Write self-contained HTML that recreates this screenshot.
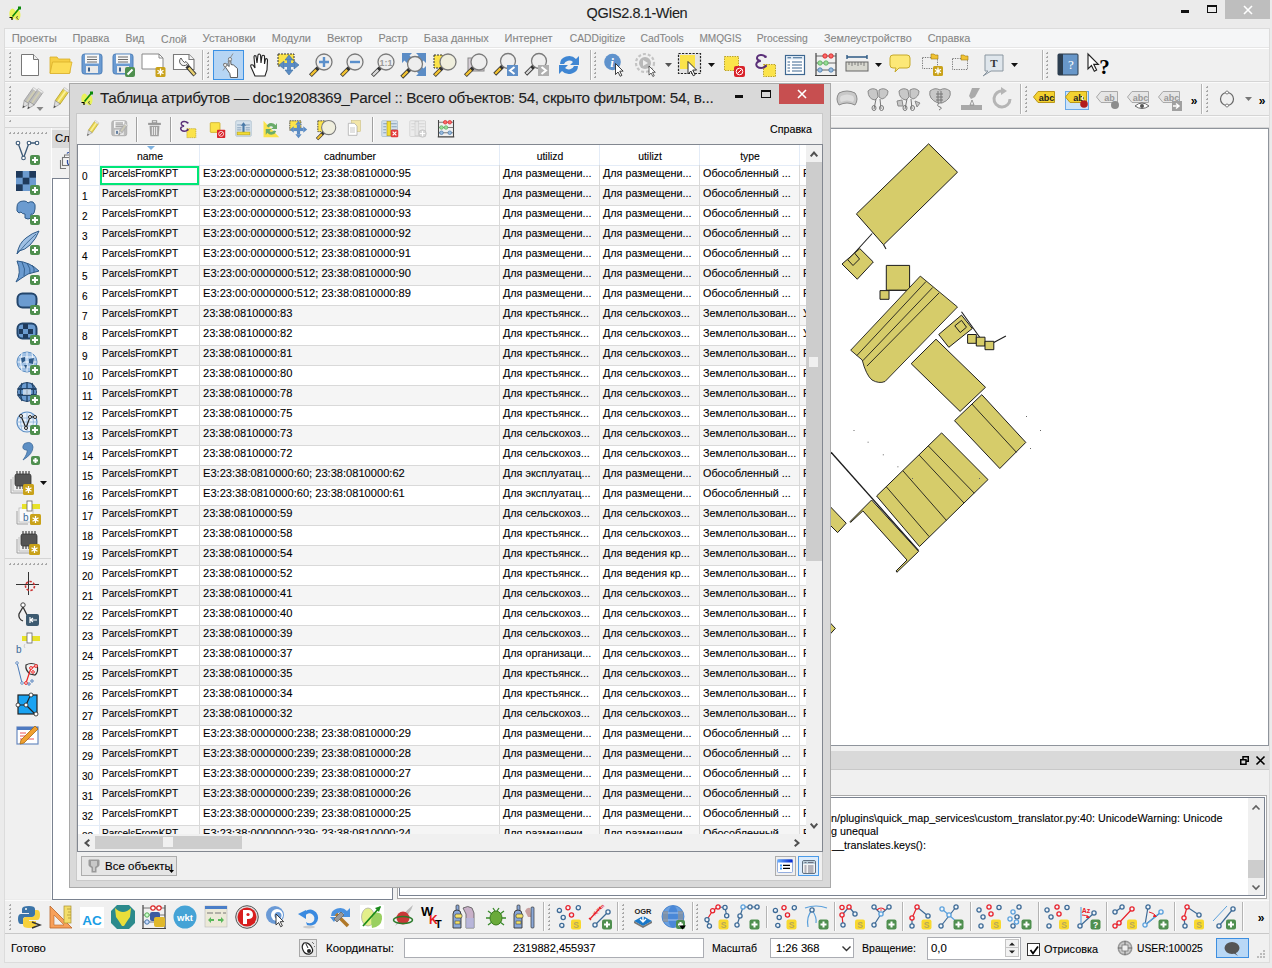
<!DOCTYPE html><html><head><meta charset='utf-8'><style>
*{margin:0;padding:0;box-sizing:border-box}
html,body{width:1272px;height:968px;overflow:hidden}
body{position:relative;background:#ebebeb;font-family:"Liberation Sans",sans-serif;}
.t{position:absolute;white-space:nowrap;line-height:1;-webkit-text-stroke:0.1px currentColor;}
svg{overflow:visible}
</style></head><body><svg style="position:absolute;left:9px;top:6px;" width="12" height="14" viewBox="0 0 12 14"><ellipse cx="3.5" cy="8" rx="3.2" ry="5.5" fill="#e9f25a"/><ellipse cx="8.3" cy="9" rx="3.2" ry="5.2" fill="#e9f25a"/><path d="M3.5 10.5 L10.5 2" stroke="#0a8a0a" stroke-width="1.6"/><rect x="9" y="0.5" width="3" height="3" fill="#0a8a0a"/><path d="M0.5 11.5 H3 V14" stroke="#000" stroke-width="1.2" fill="none"/><path d="M8.5 10 L7.5 12 L9.5 13.5" stroke="#333" stroke-width="0.8" fill="none"/></svg>
<div class="t" style="left:586.5px;top:5.6px;font-size:14.5px;color:#1e1e1e;letter-spacing:-0.4px">QGIS2.8.1-Wien</div>
<div style="position:absolute;left:1181px;top:10px;width:8px;height:3px;background:#111"></div>
<div style="position:absolute;left:1207px;top:5px;width:10px;height:8px;border:1px solid #111;border-top-width:2px"></div>
<div style="position:absolute;left:1225px;top:0px;width:45px;height:19px;background:#bebebe"></div>
<svg style="position:absolute;left:1243px;top:6px;" width="10" height="8" viewBox="0 0 10 8"><path d="M1 0 L9 8 M9 0 L1 8" stroke="#fff" stroke-width="1.6"/></svg>
<div style="position:absolute;left:5px;top:28px;width:1264px;height:20px;background:#f5f6f7;border-top:1px solid #dcdcdc;border-bottom:1px solid #e6e6e6"></div>
<div class="t" style="left:11.8px;top:33.110735px;font-size:11.21px;color:#868686;">Проекты</div>
<div class="t" style="left:72.5px;top:33.330825px;font-size:10.95px;color:#868686;">Правка</div>
<div class="t" style="left:125.5px;top:33.7964px;font-size:10.4px;color:#868686;">Вид</div>
<div class="t" style="left:161.1px;top:33.71175px;font-size:10.5px;color:#868686;">Слой</div>
<div class="t" style="left:202.5px;top:33.03455px;font-size:11.3px;color:#868686;">Установки</div>
<div class="t" style="left:271.8px;top:33.33929px;font-size:10.94px;color:#868686;">Модули</div>
<div class="t" style="left:326.9px;top:33.2885px;font-size:11.0px;color:#868686;">Вектор</div>
<div class="t" style="left:378.5px;top:33.398545000000006px;font-size:10.87px;color:#868686;">Растр</div>
<div class="t" style="left:423.8px;top:33.364685px;font-size:10.91px;color:#868686;">База данных</div>
<div class="t" style="left:504.5px;top:33.2885px;font-size:11.0px;color:#868686;">Интернет</div>
<div class="t" style="left:569.8px;top:33.88105px;font-size:10.3px;color:#868686;">CADDigitize</div>
<div class="t" style="left:640.5px;top:33.7964px;font-size:10.4px;color:#868686;">CadTools</div>
<div class="t" style="left:699.4px;top:34.05035px;font-size:10.1px;color:#868686;">MMQGIS</div>
<div class="t" style="left:756.7px;top:33.838725000000004px;font-size:10.35px;color:#868686;">Processing</div>
<div class="t" style="left:823.9px;top:33.4578px;font-size:10.8px;color:#868686;">Землеустройство</div>
<div class="t" style="left:927.7px;top:33.37315px;font-size:10.9px;color:#868686;">Справка</div>
<div style="position:absolute;left:5px;top:48px;width:1264px;height:80px;background:#f0f0f0;border-top:1px solid #fff"></div>
<div style="position:absolute;left:5px;top:81px;width:1264px;height:1px;background:#d5d5d5"></div>
<div style="position:absolute;left:5px;top:82px;width:1264px;height:1px;background:#fafafa"></div>
<div style="position:absolute;left:5px;top:115px;width:1264px;height:1px;background:#d5d5d5"></div>
<div style="position:absolute;left:5px;top:116px;width:1264px;height:1px;background:#fafafa"></div>
<div style="position:absolute;left:5px;top:127px;width:1264px;height:1px;background:#d5d5d5"></div>
<div style="position:absolute;left:5px;top:128px;width:46px;height:771px;background:#f0f0f0"></div>
<div style="position:absolute;left:51px;top:128px;width:1px;height:771px;background:#fdfdfd"></div>
<div style="position:absolute;left:52px;top:128px;width:345px;height:771px;background:#f0f0f0"></div>
<div style="position:absolute;left:52px;top:130px;width:40px;height:18px;background:#d9d9d9"></div>
<div class="t" style="left:55px;top:133px;font-size:11.3px;color:#000;">Слои</div>
<svg style="position:absolute;left:58px;top:152px;" width="12" height="18" viewBox="0 0 12 18"><path d="M2.5 8 V16.5 H8" stroke="#777" stroke-width="1.1" fill="none"/><rect x="4.5" y="5.5" width="9" height="8" fill="#f4f4f4" stroke="#777" stroke-width="1.1"/><rect x="6.5" y="3" width="8" height="2.5" fill="#f4f4f4" stroke="#777" stroke-width="1"/><path d="M9 1.5 Q9.5 0.5 11 0.5" stroke="#2a4aa0" stroke-width="1.2" fill="none"/><path d="M9.5 8 V11 Q9.5 12.5 11 12.5" stroke="#2a4aa0" stroke-width="1.3" fill="none"/></svg>
<div style="position:absolute;left:52px;top:178px;width:341px;height:722px;background:#fff;border:1px solid #7a8290"></div>
<div style="position:absolute;left:397px;top:128px;width:872px;height:618px;background:#fff;border:1px solid #8f949c"></div>
<div style="position:absolute;left:393px;top:746px;width:876px;height:154px;background:#f0f0f0"></div>
<div style="position:absolute;left:397px;top:751px;width:872px;height:19px;background:#d9d9d9;border-bottom:1px solid #c8c8c8"></div>
<div style="position:absolute;left:397px;top:795px;width:870px;height:104px;background:#fff;border:1px solid #a8a8a8"></div>
<div style="position:absolute;left:399px;top:797px;width:866px;height:99px;border:1px solid #7a8290"></div>
<div style="position:absolute;left:5px;top:900px;width:1264px;height:33px;background:#f0f0f0;border-top:1px solid #fbfbfb"></div>
<div style="position:absolute;left:5px;top:933px;width:1264px;height:29px;background:#f0f0f0;border-top:1px solid #c8c8c8"></div>
<div style="position:absolute;left:5px;top:962px;width:1264px;height:1px;background:#dcdcdc"></div>
<div style="position:absolute;left:1269px;top:28px;width:1px;height:935px;background:#dcdcdc"></div>
<div style="position:absolute;left:4px;top:28px;width:1px;height:935px;background:#dcdcdc"></div>
<svg style="position:absolute;left:9px;top:52px;" width="3" height="26" viewBox="0 0 3 26"><rect x="0" y="0" width="2" height="2" fill="#a8a8a8"/><rect x="0" y="0" width="1" height="1" fill="#ececec"/><rect x="0" y="4" width="2" height="2" fill="#a8a8a8"/><rect x="0" y="4" width="1" height="1" fill="#ececec"/><rect x="0" y="8" width="2" height="2" fill="#a8a8a8"/><rect x="0" y="8" width="1" height="1" fill="#ececec"/><rect x="0" y="12" width="2" height="2" fill="#a8a8a8"/><rect x="0" y="12" width="1" height="1" fill="#ececec"/><rect x="0" y="16" width="2" height="2" fill="#a8a8a8"/><rect x="0" y="16" width="1" height="1" fill="#ececec"/><rect x="0" y="20" width="2" height="2" fill="#a8a8a8"/><rect x="0" y="20" width="1" height="1" fill="#ececec"/><rect x="0" y="24" width="2" height="2" fill="#a8a8a8"/><rect x="0" y="24" width="1" height="1" fill="#ececec"/></svg>
<svg style="position:absolute;left:20px;top:53px;" width="24" height="24" viewBox="0 0 24 24"><path d="M1.5 1.5 H13.5 L18.5 6.5 V22.5 H1.5 Z" fill="#fff" stroke="#777" stroke-width="1"/><path d="M13.5 1.5 V6.5 H18.5" fill="#eee" stroke="#777" stroke-width="1"/></svg>
<svg style="position:absolute;left:49px;top:53px;" width="24" height="24" viewBox="0 0 24 24"><path d="M1 4 H8 L9.5 6 H21 V20 H1 Z" fill="#f6cf45" stroke="#d9ae2a" stroke-width="0.8"/><path d="M3.5 9 H23 L20.5 20.5 H1 Z" fill="#fcdc55" stroke="#d9ae2a" stroke-width="0.8"/></svg>
<svg style="position:absolute;left:81px;top:53px;" width="24" height="24" viewBox="0 0 24 24"><rect x="1" y="1" width="20" height="20" rx="2.5" fill="#6b9bd2" stroke="#4d7fb8" stroke-width="1"/><rect x="4" y="1.5" width="14" height="9" fill="#f7f7f7"/><path d="M6 4 H16 M6 6.5 H16 M6 9 H16" stroke="#444" stroke-width="0.8"/><rect x="5" y="13" width="12" height="7" fill="#eaeaea"/><rect x="7" y="14.5" width="2" height="4" fill="#3b5f8a"/></svg>
<svg style="position:absolute;left:112px;top:53px;" width="24" height="24" viewBox="0 0 24 24"><rect x="1" y="1" width="20" height="20" rx="2.5" fill="#6b9bd2" stroke="#4d7fb8" stroke-width="1"/><rect x="4" y="1.5" width="14" height="9" fill="#f7f7f7"/><path d="M6 4 H16 M6 6.5 H16 M6 9 H16" stroke="#444" stroke-width="0.8"/><rect x="5" y="13" width="12" height="7" fill="#eaeaea"/><rect x="7" y="14.5" width="2" height="4" fill="#3b5f8a"/><rect x="13" y="14" width="10" height="10" rx="2" fill="#4e8f4e"/><path d="M15.5 21.5 L20.5 16.5" stroke="#fff" stroke-width="2"/></svg>
<svg style="position:absolute;left:141px;top:53px;" width="24" height="24" viewBox="0 0 24 24"><path d="M1 1 H18 L22 5 V16 H1 Z" fill="#fff" stroke="#888" stroke-width="1"/><path d="M18 1 V5 H22" fill="none" stroke="#888" stroke-width="1"/><rect x="14.5" y="14" width="10" height="10" rx="1.5" fill="#c9a21a"/><path d="M19.5 15.5 V22.5 M16.5 17.2 L22.5 20.8 M16.5 20.8 L22.5 17.2" stroke="#fff" stroke-width="1.3"/><circle cx="19.5" cy="19.0" r="1.5" fill="#fff"/></svg>
<svg style="position:absolute;left:172px;top:53px;" width="24" height="24" viewBox="0 0 24 24"><path d="M1.5 1.5 H17 L22 6.5 V16.5 H1.5 Z" fill="#fff" stroke="#7a7a7a" stroke-width="1.1"/><path d="M17 1.5 V6.5 H22" fill="#f4f4f4" stroke="#7a7a7a" stroke-width="1.1"/><path d="M15 13 L23 22" stroke="#333" stroke-width="4.2"/><path d="M16.6 14.8 L22.6 21.6" stroke="#e8d070" stroke-width="2.4"/><path d="M9 5 A4.2 4.2 0 1 0 15 11.5 L15.5 13 L17 12 L14 8.5 L12.5 9.5 L10.5 7.5 Z" fill="#f4f4f4" stroke="#555" stroke-width="1"/></svg>
<div style="position:absolute;left:202px;top:50px;width:1px;height:30px;background:#b4b4b4"></div>
<div style="position:absolute;left:203px;top:50px;width:1px;height:30px;background:#fdfdfd"></div>
<svg style="position:absolute;left:207px;top:52px;" width="3" height="26" viewBox="0 0 3 26"><rect x="0" y="0" width="2" height="2" fill="#a8a8a8"/><rect x="0" y="0" width="1" height="1" fill="#ececec"/><rect x="0" y="4" width="2" height="2" fill="#a8a8a8"/><rect x="0" y="4" width="1" height="1" fill="#ececec"/><rect x="0" y="8" width="2" height="2" fill="#a8a8a8"/><rect x="0" y="8" width="1" height="1" fill="#ececec"/><rect x="0" y="12" width="2" height="2" fill="#a8a8a8"/><rect x="0" y="12" width="1" height="1" fill="#ececec"/><rect x="0" y="16" width="2" height="2" fill="#a8a8a8"/><rect x="0" y="16" width="1" height="1" fill="#ececec"/><rect x="0" y="20" width="2" height="2" fill="#a8a8a8"/><rect x="0" y="20" width="1" height="1" fill="#ececec"/><rect x="0" y="24" width="2" height="2" fill="#a8a8a8"/><rect x="0" y="24" width="1" height="1" fill="#ececec"/></svg>
<div style="position:absolute;left:213px;top:50px;width:31px;height:30px;background:#b6d5f4;border:1px solid #3c91e4"></div>
<svg style="position:absolute;left:217px;top:53px;" width="24" height="24" viewBox="0 0 24 24"><path d="M13.5 5 Q12 4.5 11.8 6.5 L12.2 13.5 L8.5 10.5 Q6.5 9.8 6.8 11.8 L12.8 20.5 L13.5 24.5 L20.5 24.5 L20.5 15.5 L16.5 12 L14 11.5 Z" fill="#fff" stroke="#555" stroke-width="0.95"/><path d="M16 0.5 L11 8.5 M12.8 7.5 L6 17.5" stroke="#888" stroke-width="0.9"/><circle cx="13" cy="6.2" r="1.7" fill="#e8e8e8" stroke="#666" stroke-width="0.7"/><circle cx="8.2" cy="12" r="1.7" fill="#e8e8e8" stroke="#666" stroke-width="0.7"/></svg>
<svg style="position:absolute;left:248px;top:53px;" width="24" height="24" viewBox="0 0 24 24"><path d="M7 23 L3 14 Q2 11 5 12 L7 15 L6 4 Q6 2 8 3 L9 10 L10 2 Q11 0 12.5 2 L13 10 L14 3 Q15 1.5 16.5 3 L16.5 11 L17.5 6 Q19 5 19.5 7 L19 17 L17 23 Z" fill="#fff" stroke="#222" stroke-width="1.1"/></svg>
<svg style="position:absolute;left:277px;top:53px;" width="24" height="24" viewBox="0 0 24 24"><rect x="1" y="1" width="16" height="12" fill="#fbe34a" stroke="#333" stroke-width="1" stroke-dasharray="2 1"/><path d="M12 2 L8 7 H16 Z M12 22 L8 17 H16 Z M2 12 L7 8 V16 Z M22 12 L17 8 V16 Z" fill="#5b8cc5" stroke="#3e6e9e" stroke-width="0.6"/><rect x="10" y="7" width="4" height="10" fill="#5b8cc5"/><rect x="7" y="10" width="10" height="4" fill="#5b8cc5"/></svg>
<svg style="position:absolute;left:309px;top:53px;" width="24" height="24" viewBox="0 0 24 24"><line x1="9.9" y1="14.1" x2="1.4000000000000004" y2="22.6" stroke="#333" stroke-width="4"/><line x1="7.2" y1="16.8" x2="1.9000000000000004" y2="22.1" stroke="#f2c230" stroke-width="2.4"/><circle cx="15" cy="9" r="8" fill="#eeeeee" stroke="#7a7a7a" stroke-width="1.3"/><path d="M15 4 V14 M10 9 H20" stroke="#5a8fcb" stroke-width="2.4"/></svg>
<svg style="position:absolute;left:340px;top:53px;" width="24" height="24" viewBox="0 0 24 24"><line x1="9.9" y1="14.1" x2="1.4000000000000004" y2="22.6" stroke="#333" stroke-width="4"/><line x1="7.2" y1="16.8" x2="1.9000000000000004" y2="22.1" stroke="#f2c230" stroke-width="2.4"/><circle cx="15" cy="9" r="8" fill="#eeeeee" stroke="#7a7a7a" stroke-width="1.3"/><path d="M10 9 H20" stroke="#5a8fcb" stroke-width="2.4"/></svg>
<svg style="position:absolute;left:371px;top:53px;" width="24" height="24" viewBox="0 0 24 24"><line x1="9.9" y1="14.1" x2="1.4000000000000004" y2="22.6" stroke="#333" stroke-width="4"/><line x1="7.2" y1="16.8" x2="1.9000000000000004" y2="22.1" stroke="#d8d8d8" stroke-width="2.4"/><circle cx="15" cy="9" r="8" fill="#eeeeee" stroke="#7a7a7a" stroke-width="1.3"/><text x="15" y="12.5" font-family="Liberation Sans" font-weight="bold" font-size="9" fill="#9a9a9a" text-anchor="middle">1:1</text></svg>
<svg style="position:absolute;left:402px;top:53px;" width="24" height="24" viewBox="0 0 24 24"><path d="M1 0 H10 L7.5 2.5 L10 5 L5 10 L2.5 7.5 L0 10 V0 Z M23 0 H14 L16.5 2.5 L14 5 L19 10 L21.5 7.5 L24 10 V0 Z M23 23 H14 L16.5 20.5 L14 18 L19 13 L21.5 15.5 L24 13 V23 Z" fill="#5b8cc5"/><line x1="8.25" y1="15.75" x2="-0.25" y2="24.25" stroke="#333" stroke-width="4"/><line x1="5.55" y1="18.45" x2="0.25" y2="23.75" stroke="#f2c230" stroke-width="2.4"/><circle cx="13" cy="11" r="7.5" fill="#eeeeee" stroke="#7a7a7a" stroke-width="1.3"/></svg>
<svg style="position:absolute;left:433px;top:53px;" width="24" height="24" viewBox="0 0 24 24"><rect x="1" y="2" width="9" height="13" fill="#fbe34a" stroke="#333" stroke-width="1" stroke-dasharray="2 1"/><line x1="9.9" y1="14.1" x2="1.4000000000000004" y2="22.6" stroke="#333" stroke-width="4"/><line x1="7.2" y1="16.8" x2="1.9000000000000004" y2="22.1" stroke="#f2c230" stroke-width="2.4"/><circle cx="15" cy="9" r="8" fill="#efeedd" stroke="#7a7a7a" stroke-width="1.3"/></svg>
<svg style="position:absolute;left:465px;top:53px;" width="24" height="24" viewBox="0 0 24 24"><rect x="3" y="5" width="16" height="13" fill="#d8d0d8" stroke="#888" stroke-width="1"/><line x1="8.9" y1="14.1" x2="0.40000000000000036" y2="22.6" stroke="#333" stroke-width="4"/><line x1="6.2" y1="16.8" x2="0.9000000000000004" y2="22.1" stroke="#f2c230" stroke-width="2.4"/><circle cx="14" cy="9" r="8" fill="#eeeeee" stroke="#7a7a7a" stroke-width="1.3"/></svg>
<svg style="position:absolute;left:495px;top:53px;" width="24" height="24" viewBox="0 0 24 24"><line x1="8.25" y1="12.75" x2="-0.25" y2="21.25" stroke="#333" stroke-width="4"/><line x1="5.55" y1="15.45" x2="0.25" y2="20.75" stroke="#f2c230" stroke-width="2.4"/><circle cx="13" cy="8" r="7.5" fill="#eeeeee" stroke="#7a7a7a" stroke-width="1.3"/><rect x="12" y="12" width="11" height="11" fill="#5f8fc8"/><path d="M19.5 14 L15 17.5 L19.5 21" stroke="#fff" stroke-width="2" fill="none"/></svg>
<svg style="position:absolute;left:526px;top:53px;" width="24" height="24" viewBox="0 0 24 24"><line x1="8.25" y1="12.75" x2="-0.25" y2="21.25" stroke="#333" stroke-width="4"/><line x1="5.55" y1="15.45" x2="0.25" y2="20.75" stroke="#d8d8d8" stroke-width="2.4"/><circle cx="13" cy="8" r="7.5" fill="#eeeeee" stroke="#7a7a7a" stroke-width="1.3"/><rect x="12" y="12" width="11" height="11" fill="#b0b0b0"/><path d="M15.5 14 L20 17.5 L15.5 21" stroke="#fff" stroke-width="2" fill="none"/></svg>
<svg style="position:absolute;left:557px;top:53px;" width="24" height="24" viewBox="0 0 24 24"><path d="M3 11 A9 8 0 0 1 19 6 L22 3 V12 H13 L16 9 A5.5 5 0 0 0 7 11 Z" fill="#3f86d3"/><path d="M21 13 A9 8 0 0 1 5 18 L2 21 V12 H11 L8 15 A5.5 5 0 0 0 17 13 Z" fill="#3f86d3"/></svg>
<div style="position:absolute;left:590px;top:50px;width:1px;height:30px;background:#b4b4b4"></div>
<div style="position:absolute;left:591px;top:50px;width:1px;height:30px;background:#fdfdfd"></div>
<svg style="position:absolute;left:594px;top:52px;" width="3" height="26" viewBox="0 0 3 26"><rect x="0" y="0" width="2" height="2" fill="#a8a8a8"/><rect x="0" y="0" width="1" height="1" fill="#ececec"/><rect x="0" y="4" width="2" height="2" fill="#a8a8a8"/><rect x="0" y="4" width="1" height="1" fill="#ececec"/><rect x="0" y="8" width="2" height="2" fill="#a8a8a8"/><rect x="0" y="8" width="1" height="1" fill="#ececec"/><rect x="0" y="12" width="2" height="2" fill="#a8a8a8"/><rect x="0" y="12" width="1" height="1" fill="#ececec"/><rect x="0" y="16" width="2" height="2" fill="#a8a8a8"/><rect x="0" y="16" width="1" height="1" fill="#ececec"/><rect x="0" y="20" width="2" height="2" fill="#a8a8a8"/><rect x="0" y="20" width="1" height="1" fill="#ececec"/><rect x="0" y="24" width="2" height="2" fill="#a8a8a8"/><rect x="0" y="24" width="1" height="1" fill="#ececec"/></svg>
<svg style="position:absolute;left:603px;top:53px;" width="24" height="24" viewBox="0 0 24 24"><circle cx="9.5" cy="9" r="8.3" fill="#5f92cc"/><text x="9" y="14" font-family="Liberation Serif" font-style="italic" font-weight="bold" font-size="13" fill="#fff" text-anchor="middle">i</text><path transform="translate(12.5,10.5) scale(0.85)" d="M0 0 L0 13 L3 10 L5.5 15 L7.5 14 L5 9 L9 9 Z" fill="#fff" stroke="#222" stroke-width="1"/></svg>
<svg style="position:absolute;left:634px;top:53px;" width="24" height="24" viewBox="0 0 24 24"><circle cx="11" cy="10" r="9" fill="none" stroke="#c4c4c4" stroke-width="2.2" stroke-dasharray="3 2"/><circle cx="11" cy="10" r="6" fill="#b9b9b9"/><path d="M9 7 L14 10 L9 13 Z" fill="#eee"/><path transform="translate(15,13) scale(0.7)" d="M0 0 L0 13 L3 10 L5.5 15 L7.5 14 L5 9 L9 9 Z" fill="#fff" stroke="#222" stroke-width="1"/></svg>
<svg style="position:absolute;left:664px;top:53px;" width="10" height="24" viewBox="0 0 10 24"><path d="M1 10 H8 L4.5 14 Z" fill="#555"/></svg>
<svg style="position:absolute;left:677px;top:53px;" width="24" height="24" viewBox="0 0 24 24"><rect x="1.5" y="0.5" width="22" height="20" fill="#e4e4e4" stroke="#222" stroke-width="1.2" stroke-dasharray="2.2 1.3"/><rect x="3" y="2" width="15" height="14" fill="#fbe34a"/><path transform="translate(11,8.5) scale(0.95)" d="M0 0 L0 13 L3 10 L5.5 15 L7.5 14 L5 9 L9 9 Z" fill="#fff" stroke="#222" stroke-width="1"/></svg>
<svg style="position:absolute;left:707px;top:53px;" width="10" height="24" viewBox="0 0 10 24"><path d="M1 10 H8 L4.5 14 Z" fill="#111"/></svg>
<svg style="position:absolute;left:723px;top:53px;" width="24" height="24" viewBox="0 0 24 24"><rect x="1.5" y="3.5" width="14" height="14" fill="#fbe34a" stroke="#b59b18" stroke-width="0.9" stroke-dasharray="1.5 1"/><rect x="11" y="13" width="11" height="11" rx="2" fill="#d9232b"/><circle cx="16.5" cy="18.5" r="3.3" fill="none" stroke="#fff" stroke-width="1"/><path d="M14.5 20.5 L18.5 16.5" stroke="#fff" stroke-width="1"/></svg>
<svg style="position:absolute;left:754px;top:53px;" width="24" height="24" viewBox="0 0 24 24"><rect x="9.5" y="11.5" width="12" height="12" fill="#fbe34a" stroke="#b59b18" stroke-width="0.9" stroke-dasharray="1.5 1"/><g transform="translate(1,1) scale(0.82)"><path d="M12.5 3.5 Q11 1 7 1.2 Q2 1.8 2.5 5.5 Q3 8 7 8.5 Q1.5 9.2 1.5 13 Q2 17 7.5 17 Q11.5 17 13 14.5" fill="none" stroke="#5a2f78" stroke-width="2.4"/><circle cx="12.8" cy="3.3" r="1.6" fill="#5a2f78"/><circle cx="13" cy="14.6" r="1.6" fill="#5a2f78"/></g></svg>
<svg style="position:absolute;left:784px;top:53px;" width="24" height="24" viewBox="0 0 24 24"><rect x="1.5" y="2.5" width="19" height="19" fill="#fff" stroke="#3d6790" stroke-width="1.2"/><rect x="2" y="3" width="18" height="3.5" fill="#dde8f3"/><path d="M3.5 4.8 H7 M9 4.8 H18 M3.5 9 H6 M8 9 H18 M3.5 12 H6 M8 12 H18 M3.5 15 H6 M8 15 H18 M3.5 18 H6 M8 18 H18" stroke="#3d6790" stroke-width="1.1"/></svg>
<svg style="position:absolute;left:814px;top:53px;" width="24" height="24" viewBox="0 0 24 24"><path d="M2 0 V22 M22 0 V22 M1 22.5 H23" stroke="#444" stroke-width="1.2"/><path d="M2 3 H22 M2 10 H22 M2 17 H22" stroke="#555" stroke-width="0.9"/><circle cx="11" cy="3" r="2.2" fill="#f66" stroke="#c22" stroke-width="0.8"/><circle cx="17" cy="3" r="2.2" fill="#f66" stroke="#c22" stroke-width="0.8"/><circle cx="6" cy="10" r="2.2" fill="#9d9" stroke="#5a5" stroke-width="0.8"/><circle cx="12" cy="10" r="2.2" fill="#9d9" stroke="#5a5" stroke-width="0.8"/><circle cx="6" cy="17" r="2.2" fill="#9bd" stroke="#47a" stroke-width="0.8"/><circle cx="17" cy="17" r="2.2" fill="#9bd" stroke="#47a" stroke-width="0.8"/></svg>
<svg style="position:absolute;left:845px;top:53px;" width="24" height="24" viewBox="0 0 24 24"><rect x="1" y="9" width="22" height="9" fill="#d8d8d0" stroke="#666" stroke-width="1"/><path d="M4 9 V12 M7 9 V13 M10 9 V12 M13 9 V13 M16 9 V12 M19 9 V13" stroke="#666" stroke-width="0.8"/><path d="M2 4 H22 M2 2 V6 M22 2 V6" stroke="#2e5a84" stroke-width="1.4"/></svg>
<svg style="position:absolute;left:874px;top:53px;" width="10" height="24" viewBox="0 0 10 24"><path d="M1 10 H8 L4.5 14 Z" fill="#111"/></svg>
<svg style="position:absolute;left:889px;top:53px;" width="24" height="24" viewBox="0 0 24 24"><path d="M4 2 H18 Q21 2 21 5 V12 Q21 15 18 15 H10 L6 19 L7 15 H4 Q1 15 1 12 V5 Q1 2 4 2 Z" fill="#fce877" stroke="#c6a92a" stroke-width="1"/></svg>
<svg style="position:absolute;left:921px;top:53px;" width="24" height="24" viewBox="0 0 24 24"><rect x="1.5" y="4.5" width="15" height="11" fill="none" stroke="#555" stroke-width="0.8" stroke-dasharray="1.2 1.2"/><path d="M10 5 V1 H13 L14 2 H17 V6 H10Z" fill="#f1c232" stroke="#9a7a14" stroke-width="0.6"/><rect x="12" y="13" width="10" height="10" rx="1.5" fill="#c9a21a"/><path d="M17.0 14.5 V21.5 M14.0 16.2 L20.0 19.8 M14.0 19.8 L20.0 16.2" stroke="#fff" stroke-width="1.3"/><circle cx="17.0" cy="18.0" r="1.5" fill="#fff"/></svg>
<svg style="position:absolute;left:951px;top:53px;" width="24" height="24" viewBox="0 0 24 24"><rect x="1.5" y="5.5" width="15" height="11" fill="none" stroke="#555" stroke-width="0.8" stroke-dasharray="1.2 1.2"/><path d="M10 6 V2 H13 L14 3 H17 V7 H10Z" fill="#f1c232" stroke="#9a7a14" stroke-width="0.6"/></svg>
<svg style="position:absolute;left:982px;top:53px;" width="24" height="24" viewBox="0 0 24 24"><path d="M3 2 H21 V18 H9 L1 23 L6 18 H3 Z" fill="#dfe6ec" stroke="#8a96a0" stroke-width="1"/><text x="12" y="14" font-family="Liberation Serif" font-weight="bold" font-size="11" fill="#333" text-anchor="middle">T</text></svg>
<svg style="position:absolute;left:1010px;top:53px;" width="10" height="24" viewBox="0 0 10 24"><path d="M1 10 H8 L4.5 14 Z" fill="#111"/></svg>
<div style="position:absolute;left:1042px;top:50px;width:1px;height:30px;background:#b4b4b4"></div>
<div style="position:absolute;left:1043px;top:50px;width:1px;height:30px;background:#fdfdfd"></div>
<svg style="position:absolute;left:1046px;top:52px;" width="3" height="26" viewBox="0 0 3 26"><rect x="0" y="0" width="2" height="2" fill="#a8a8a8"/><rect x="0" y="0" width="1" height="1" fill="#ececec"/><rect x="0" y="4" width="2" height="2" fill="#a8a8a8"/><rect x="0" y="4" width="1" height="1" fill="#ececec"/><rect x="0" y="8" width="2" height="2" fill="#a8a8a8"/><rect x="0" y="8" width="1" height="1" fill="#ececec"/><rect x="0" y="12" width="2" height="2" fill="#a8a8a8"/><rect x="0" y="12" width="1" height="1" fill="#ececec"/><rect x="0" y="16" width="2" height="2" fill="#a8a8a8"/><rect x="0" y="16" width="1" height="1" fill="#ececec"/><rect x="0" y="20" width="2" height="2" fill="#a8a8a8"/><rect x="0" y="20" width="1" height="1" fill="#ececec"/><rect x="0" y="24" width="2" height="2" fill="#a8a8a8"/><rect x="0" y="24" width="1" height="1" fill="#ececec"/></svg>
<svg style="position:absolute;left:1057px;top:53px;" width="24" height="24" viewBox="0 0 24 24"><rect x="1" y="1" width="20" height="21" rx="1" fill="#6897c9" stroke="#2b3a4a" stroke-width="1"/><rect x="1" y="1" width="5" height="21" fill="#2c3e50"/><text x="14" y="16" font-family="Liberation Serif" font-size="13" fill="#fff" text-anchor="middle">?</text></svg>
<svg style="position:absolute;left:1087px;top:53px;" width="24" height="24" viewBox="0 0 24 24"><path transform="translate(1,1) scale(1.15)" d="M0 0 L0 13 L3 10 L5.5 15 L7.5 14 L5 9 L9 9 Z" fill="#fff" stroke="#222" stroke-width="1"/><text x="17.5" y="21" font-family="Liberation Serif" font-weight="bold" font-size="21" fill="#000" text-anchor="middle">?</text></svg>
<svg style="position:absolute;left:9px;top:86px;" width="3" height="26" viewBox="0 0 3 26"><rect x="0" y="0" width="2" height="2" fill="#a8a8a8"/><rect x="0" y="0" width="1" height="1" fill="#ececec"/><rect x="0" y="4" width="2" height="2" fill="#a8a8a8"/><rect x="0" y="4" width="1" height="1" fill="#ececec"/><rect x="0" y="8" width="2" height="2" fill="#a8a8a8"/><rect x="0" y="8" width="1" height="1" fill="#ececec"/><rect x="0" y="12" width="2" height="2" fill="#a8a8a8"/><rect x="0" y="12" width="1" height="1" fill="#ececec"/><rect x="0" y="16" width="2" height="2" fill="#a8a8a8"/><rect x="0" y="16" width="1" height="1" fill="#ececec"/><rect x="0" y="20" width="2" height="2" fill="#a8a8a8"/><rect x="0" y="20" width="1" height="1" fill="#ececec"/><rect x="0" y="24" width="2" height="2" fill="#a8a8a8"/><rect x="0" y="24" width="1" height="1" fill="#ececec"/></svg>
<svg style="position:absolute;left:19px;top:87px;" width="24" height="24" viewBox="0 0 24 24"><g transform="translate(-2,0)"><g transform="rotate(35 12 12)"><rect x="9" y="1" width="6" height="15" fill="#bdbdbd" stroke="#a0a0a0" stroke-width="0.8"/><rect x="11" y="1" width="2" height="15" fill="#fbf3a0" opacity="0.3"/><rect x="9" y="0" width="6" height="2" fill="#eee" stroke="#bbb" stroke-width="0.6"/><path d="M9 16 L15 16 L12 23 Z" fill="#ddd" stroke="#888" stroke-width="0.6"/><path d="M11 20.5 L13 20.5 L12 23Z" fill="#444"/></g></g><g transform="translate(3,1)"><g transform="rotate(35 12 12)"><rect x="9" y="1" width="6" height="15" fill="#bdbdbd" stroke="#a0a0a0" stroke-width="0.8"/><rect x="11" y="1" width="2" height="15" fill="#fbf3a0" opacity="0.3"/><rect x="9" y="0" width="6" height="2" fill="#eee" stroke="#bbb" stroke-width="0.6"/><path d="M9 16 L15 16 L12 23 Z" fill="#ddd" stroke="#888" stroke-width="0.6"/><path d="M11 20.5 L13 20.5 L12 23Z" fill="#444"/></g></g><path d="M17.5 20 H24.5 L21.0 24 Z" fill="#888"/></svg>
<svg style="position:absolute;left:48px;top:87px;" width="24" height="24" viewBox="0 0 24 24"><g transform="rotate(35 12 12)"><rect x="9" y="1" width="6" height="15" fill="#e8d44d" stroke="#b8a430" stroke-width="0.8"/><rect x="11" y="1" width="2" height="15" fill="#fbf3a0" opacity="0.9"/><rect x="9" y="0" width="6" height="2" fill="#eee" stroke="#bbb" stroke-width="0.6"/><path d="M9 16 L15 16 L12 23 Z" fill="#ddd" stroke="#888" stroke-width="0.6"/><path d="M11 20.5 L13 20.5 L12 23Z" fill="#444"/></g></svg>
<svg style="position:absolute;left:835px;top:87px;" width="24" height="24" viewBox="0 0 24 24"><g fill="#c8c8c8" stroke="#8a8a8a" stroke-width="1"><path d="M4 6 Q12 2 20 6 Q24 12 20 18 Q12 14 4 18 Q0 12 4 6 Z"/></g><path d="M6 9 Q12 6 18 9 Q20 12 18 15 Q12 12 6 15 Q4 12 6 9Z" fill="#ddd"/></svg>
<svg style="position:absolute;left:866px;top:87px;" width="24" height="24" viewBox="0 0 24 24"><g fill="#c8c8c8" stroke="#8a8a8a" stroke-width="1"><path d="M2 4 Q6 0 11 3 L12 10 L9 13 Q2 12 2 4 Z M13 3 Q18 0 22 4 Q22 10 16 12 L13 10 Z"/></g><path d="M10 12 L8 22 M14 12 L15 22" stroke="#777" stroke-width="1"/><ellipse cx="8" cy="21" rx="2" ry="2.5" fill="none" stroke="#777"/><ellipse cx="15.5" cy="21" rx="2" ry="2.5" fill="none" stroke="#777"/></svg>
<svg style="position:absolute;left:897px;top:87px;" width="24" height="24" viewBox="0 0 24 24"><g fill="#c8c8c8" stroke="#8a8a8a" stroke-width="1"><path d="M2 4 Q6 0 11 3 L12 10 L9 13 Q2 12 2 4 Z M13 3 Q18 0 22 4 Q22 10 16 12 L13 10 Z M0 14 L5 13 L6 19 L1 19Z M18 14 L23 16 L20 20Z"/></g><path d="M10 12 L8 22 M14 12 L15 22" stroke="#777" stroke-width="1"/><ellipse cx="8" cy="21" rx="2" ry="2.5" fill="none" stroke="#777"/><ellipse cx="15.5" cy="21" rx="2" ry="2.5" fill="none" stroke="#777"/></svg>
<svg style="position:absolute;left:928px;top:87px;" width="24" height="24" viewBox="0 0 24 24"><g fill="#c8c8c8" stroke="#8a8a8a" stroke-width="1"><path d="M2 4 Q7 0 12 3 Q17 0 22 4 Q24 12 14 16 L10 16 Q0 12 2 4 Z"/></g><path d="M10 4 V16 M13 4 V16 M8 7 H15 M8 10 H15 M8 13 H15 M11 16 Q8 19 12 20 Q15 21 11 23" stroke="#777" stroke-width="1" fill="none"/></svg>
<svg style="position:absolute;left:960px;top:87px;" width="24" height="24" viewBox="0 0 24 24"><path d="M12 1 H20 L15 10 L11 12 L9 9 Z" fill="#aaa"/><path d="M1 18 H22 V23 H1 Z" fill="#a8a8a8"/><path d="M10 18 L12 13 L14 18 Z" fill="#eee" stroke="#888" stroke-width="0.8"/></svg>
<svg style="position:absolute;left:991px;top:87px;" width="24" height="24" viewBox="0 0 24 24"><path d="M19 12 A8 8 0 1 1 12 4" fill="none" stroke="#b5b5b5" stroke-width="3"/><path d="M10 0 L16 4 L10 8 Z" fill="#b5b5b5"/></svg>
<div style="position:absolute;left:1020px;top:84px;width:1px;height:30px;background:#b4b4b4"></div>
<div style="position:absolute;left:1021px;top:84px;width:1px;height:30px;background:#fdfdfd"></div>
<svg style="position:absolute;left:1025px;top:86px;" width="3" height="26" viewBox="0 0 3 26"><rect x="0" y="0" width="2" height="2" fill="#a8a8a8"/><rect x="0" y="0" width="1" height="1" fill="#ececec"/><rect x="0" y="4" width="2" height="2" fill="#a8a8a8"/><rect x="0" y="4" width="1" height="1" fill="#ececec"/><rect x="0" y="8" width="2" height="2" fill="#a8a8a8"/><rect x="0" y="8" width="1" height="1" fill="#ececec"/><rect x="0" y="12" width="2" height="2" fill="#a8a8a8"/><rect x="0" y="12" width="1" height="1" fill="#ececec"/><rect x="0" y="16" width="2" height="2" fill="#a8a8a8"/><rect x="0" y="16" width="1" height="1" fill="#ececec"/><rect x="0" y="20" width="2" height="2" fill="#a8a8a8"/><rect x="0" y="20" width="1" height="1" fill="#ececec"/><rect x="0" y="24" width="2" height="2" fill="#a8a8a8"/><rect x="0" y="24" width="1" height="1" fill="#ececec"/></svg>
<svg style="position:absolute;left:1033px;top:87px;" width="24" height="24" viewBox="0 0 24 24"><path d="M0.5 10 L5 4.5 H21.5 V15.5 H5 Z" fill="#f4d230" stroke="#b9961b" stroke-width="1"/><text x="13.5" y="13.5" font-family="Liberation Sans" font-weight="bold" font-size="9" fill="#222" text-anchor="middle">abc</text></svg>
<div style="position:absolute;left:1065px;top:91px;width:24px;height:19px;background:#cde3f8;border:1px solid #6aa8e8"></div>
<svg style="position:absolute;left:1065px;top:87px;" width="24" height="24" viewBox="0 0 24 24"><path d="M0.5 10 L5 4.5 H21.5 V15.5 H5 Z" fill="#f4d230" stroke="#b9961b" stroke-width="1"/><text x="13.5" y="13.5" font-family="Liberation Sans" font-weight="bold" font-size="9" fill="#222" text-anchor="middle">ab</text><circle cx="19" cy="17" r="3.8" fill="#b21c1c"/><path d="M18 9 Q16 12 18.5 13" stroke="#fff" stroke-width="1.2" fill="none"/></svg>
<svg style="position:absolute;left:1096px;top:87px;" width="24" height="24" viewBox="0 0 24 24"><path d="M0.5 10 L5 4.5 H21.5 V15.5 H5 Z" fill="#e6e6e6" stroke="#a9a9a9" stroke-width="1"/><text x="13.5" y="13.5" font-family="Liberation Sans" font-weight="bold" font-size="9" fill="#999" text-anchor="middle">ab</text><circle cx="19" cy="18" r="4" fill="#8c8c8c"/></svg>
<svg style="position:absolute;left:1127px;top:87px;" width="24" height="24" viewBox="0 0 24 24"><path d="M0.5 10 L5 4.5 H21.5 V15.5 H5 Z" fill="#e6e6e6" stroke="#a9a9a9" stroke-width="1"/><text x="13.5" y="13.5" font-family="Liberation Sans" font-weight="bold" font-size="9" fill="#999" text-anchor="middle">abc</text><path d="M8 19 Q15 13 22 19 Q15 24 8 19 Z" fill="#fff" stroke="#666" stroke-width="1"/><circle cx="15" cy="19" r="2" fill="#555"/></svg>
<svg style="position:absolute;left:1158px;top:87px;" width="24" height="24" viewBox="0 0 24 24"><path d="M0.5 10 L5 4.5 H21.5 V15.5 H5 Z" fill="#e6e6e6" stroke="#a9a9a9" stroke-width="1"/><text x="13.5" y="13.5" font-family="Liberation Sans" font-weight="bold" font-size="9" fill="#999" text-anchor="middle">abc</text><rect x="14" y="14" width="10" height="10" fill="#a0a0a0"/><path d="M15 19 H20 M18 16.5 L21 19 L18 21.5" stroke="#fff" stroke-width="1.5" fill="none"/></svg>
<svg style="position:absolute;left:1190px;top:87px;" width="10" height="24" viewBox="0 0 10 24"><text x="4" y="18" font-family="Liberation Sans" font-weight="bold" font-size="12" fill="#000" text-anchor="middle">»</text></svg>
<div style="position:absolute;left:1201px;top:84px;width:1px;height:30px;background:#b4b4b4"></div>
<div style="position:absolute;left:1202px;top:84px;width:1px;height:30px;background:#fdfdfd"></div>
<svg style="position:absolute;left:1206px;top:86px;" width="3" height="26" viewBox="0 0 3 26"><rect x="0" y="0" width="2" height="2" fill="#a8a8a8"/><rect x="0" y="0" width="1" height="1" fill="#ececec"/><rect x="0" y="4" width="2" height="2" fill="#a8a8a8"/><rect x="0" y="4" width="1" height="1" fill="#ececec"/><rect x="0" y="8" width="2" height="2" fill="#a8a8a8"/><rect x="0" y="8" width="1" height="1" fill="#ececec"/><rect x="0" y="12" width="2" height="2" fill="#a8a8a8"/><rect x="0" y="12" width="1" height="1" fill="#ececec"/><rect x="0" y="16" width="2" height="2" fill="#a8a8a8"/><rect x="0" y="16" width="1" height="1" fill="#ececec"/><rect x="0" y="20" width="2" height="2" fill="#a8a8a8"/><rect x="0" y="20" width="1" height="1" fill="#ececec"/><rect x="0" y="24" width="2" height="2" fill="#a8a8a8"/><rect x="0" y="24" width="1" height="1" fill="#ececec"/></svg>
<svg style="position:absolute;left:1219px;top:87px;" width="18" height="24" viewBox="0 0 18 24"><circle cx="8" cy="12" r="6.5" fill="none" stroke="#666" stroke-width="1.2"/><circle cx="8" cy="5.5" r="1.5" fill="#fff" stroke="#666" stroke-width="0.8"/><circle cx="8" cy="18.5" r="1.5" fill="#fff" stroke="#666" stroke-width="0.8"/></svg>
<svg style="position:absolute;left:1244px;top:87px;" width="10" height="24" viewBox="0 0 10 24"><path d="M1 10 H8 L4.5 14 Z" fill="#777"/></svg>
<svg style="position:absolute;left:1258px;top:87px;" width="10" height="24" viewBox="0 0 10 24"><text x="4" y="18" font-family="Liberation Sans" font-weight="bold" font-size="12" fill="#000" text-anchor="middle">»</text></svg>
<svg style="position:absolute;left:9px;top:120px;" width="3" height="4" viewBox="0 0 3 4"><rect x="0" y="0" width="2" height="2" fill="#a8a8a8"/><rect x="0" y="0" width="1" height="1" fill="#ececec"/></svg>
<svg style="position:absolute;left:9px;top:132px;" width="39" height="3" viewBox="0 0 39 3"><rect x="0" y="0" width="2" height="2" fill="#a8a8a8"/><rect x="0" y="0" width="1" height="1" fill="#ececec"/><rect x="4" y="0" width="2" height="2" fill="#a8a8a8"/><rect x="4" y="0" width="1" height="1" fill="#ececec"/><rect x="8" y="0" width="2" height="2" fill="#a8a8a8"/><rect x="8" y="0" width="1" height="1" fill="#ececec"/><rect x="12" y="0" width="2" height="2" fill="#a8a8a8"/><rect x="12" y="0" width="1" height="1" fill="#ececec"/><rect x="16" y="0" width="2" height="2" fill="#a8a8a8"/><rect x="16" y="0" width="1" height="1" fill="#ececec"/><rect x="20" y="0" width="2" height="2" fill="#a8a8a8"/><rect x="20" y="0" width="1" height="1" fill="#ececec"/><rect x="24" y="0" width="2" height="2" fill="#a8a8a8"/><rect x="24" y="0" width="1" height="1" fill="#ececec"/><rect x="28" y="0" width="2" height="2" fill="#a8a8a8"/><rect x="28" y="0" width="1" height="1" fill="#ececec"/><rect x="32" y="0" width="2" height="2" fill="#a8a8a8"/><rect x="32" y="0" width="1" height="1" fill="#ececec"/><rect x="36" y="0" width="2" height="2" fill="#a8a8a8"/><rect x="36" y="0" width="1" height="1" fill="#ececec"/></svg>
<svg style="position:absolute;left:16px;top:141px;" width="24" height="24" viewBox="0 0 24 24"><path d="M2 2 L7.5 17 L13 2 L21 2" fill="none" stroke="#3c5a78" stroke-width="1.3"/><circle cx="2" cy="2" r="1.8" fill="#fff" stroke="#3c5a78" stroke-width="1.1"/><circle cx="13" cy="2" r="1.8" fill="#fff" stroke="#3c5a78" stroke-width="1.1"/><circle cx="21" cy="2" r="1.8" fill="#fff" stroke="#3c5a78" stroke-width="1.1"/><circle cx="7.5" cy="17" r="1.8" fill="#fff" stroke="#3c5a78" stroke-width="1.1"/><rect x="14" y="14" width="10" height="10" rx="2" fill="#4f8f4f"/><path d="M19.0 16 V22 M16 19.0 H22" stroke="#fff" stroke-width="2"/></svg>
<svg style="position:absolute;left:16px;top:171px;" width="24" height="24" viewBox="0 0 24 24"><rect x="0" y="0" width="20" height="20" fill="#6c9bd0"/><rect x="0" y="0" width="6.7" height="6.7" fill="#1f3a5c"/><rect x="13.3" y="0" width="6.7" height="6.7" fill="#1f3a5c"/><rect x="6.7" y="6.7" width="6.7" height="6.7" fill="#1f3a5c"/><rect x="0" y="13.3" width="6.7" height="6.7" fill="#1f3a5c"/><rect x="14" y="14" width="10" height="10" rx="2" fill="#4f8f4f"/><path d="M19.0 16 V22 M16 19.0 H22" stroke="#fff" stroke-width="2"/></svg>
<svg style="position:absolute;left:16px;top:201px;" width="24" height="24" viewBox="0 0 24 24"><path d="M1 6 Q1 0 8 0 Q11 0 12 2 Q14 0 17 1 Q20 3 19 8 L18 12 Q17 14 15 13 L15 17 Q12 19 9 17 L9 13 Q6 13 5 11 L3 12 Q0 11 1 6 Z" fill="#6b9bd0" stroke="#2f5a88" stroke-width="1"/><rect x="14" y="14" width="10" height="10" rx="2" fill="#4f8f4f"/><path d="M19.0 16 V22 M16 19.0 H22" stroke="#fff" stroke-width="2"/></svg>
<svg style="position:absolute;left:16px;top:231px;" width="24" height="24" viewBox="0 0 24 24"><path d="M1 23 Q3 12 10 7 Q16 2 23 0 Q20 8 14 14 Q9 19 3 20 Z" fill="#9fc0e4" stroke="#2f5a88" stroke-width="1"/><path d="M1 23 Q10 12 20 3" stroke="#2f5a88" stroke-width="0.8" fill="none"/><rect x="14" y="14" width="10" height="10" rx="2" fill="#4f8f4f"/><path d="M19.0 16 V22 M16 19.0 H22" stroke="#fff" stroke-width="2"/></svg>
<svg style="position:absolute;left:16px;top:261px;" width="24" height="24" viewBox="0 0 24 24"><path d="M1 0 Q14 1 23 10 L12 13 Q4 18 0 21 Q6 12 1 0 Z" fill="#6b9bd0" stroke="#2f5a88" stroke-width="1"/><path d="M6 1 Q10 8 8 15 M11 2 Q15 8 14 13 M16 4 Q19 8 18 11" stroke="#2f5a88" stroke-width="0.9" fill="none"/><rect x="14" y="14" width="10" height="10" rx="2" fill="#4f8f4f"/><path d="M19.0 16 V22 M16 19.0 H22" stroke="#fff" stroke-width="2"/></svg>
<svg style="position:absolute;left:16px;top:291px;" width="24" height="24" viewBox="0 0 24 24"><rect x="1.5" y="2.5" width="19" height="14" rx="5" fill="#6b9bd0" stroke="#23456b" stroke-width="2"/><rect x="14" y="14" width="10" height="10" rx="2" fill="#4f8f4f"/><path d="M19.0 16 V22 M16 19.0 H22" stroke="#fff" stroke-width="2"/></svg>
<svg style="position:absolute;left:16px;top:321px;" width="24" height="24" viewBox="0 0 24 24"><rect x="1.5" y="2.5" width="19" height="15" rx="5" fill="#6b9bd0" stroke="#23456b" stroke-width="2"/><rect x="7" y="3" width="5" height="5" fill="#1f3a5c"/><rect x="12" y="8" width="5" height="5" fill="#1f3a5c"/><rect x="7" y="13" width="5" height="4" fill="#1f3a5c"/><rect x="3" y="8" width="4" height="5" fill="#1f3a5c"/><rect x="14" y="14" width="10" height="10" rx="2" fill="#4f8f4f"/><path d="M19.0 16 V22 M16 19.0 H22" stroke="#fff" stroke-width="2"/></svg>
<svg style="position:absolute;left:16px;top:351px;" width="24" height="24" viewBox="0 0 24 24"><circle cx="11" cy="11" r="10" fill="#9fc0e4" stroke="#5d8fc4" stroke-width="1"/><path d="M3 6 H19 M1.5 11 H20.5 M3 16 H19 M11 1 V21 M6 2 Q3 11 6 20 M16 2 Q19 11 16 20" stroke="#fff" stroke-width="0.8" fill="none"/><path d="M5 7 L9 6 L9 10 L6 12Z M13 8 L18 7 L17 13 L13 12Z M8 14 L11 14 L10 18Z" fill="#2f5a88"/><rect x="14" y="14" width="10" height="10" rx="2" fill="#4f8f4f"/><path d="M19.0 16 V22 M16 19.0 H22" stroke="#fff" stroke-width="2"/></svg>
<svg style="position:absolute;left:16px;top:381px;" width="24" height="24" viewBox="0 0 24 24"><circle cx="11" cy="11" r="10" fill="#23456b"/><ellipse cx="11" cy="11" rx="9" ry="9" fill="#6b9bd0"/><path d="M1.5 8 H20.5 M1.5 14 H20.5" stroke="#23456b" stroke-width="2"/><path d="M11 1 V21 M6 2 Q3 11 6 20 M16 2 Q19 11 16 20" stroke="#23456b" stroke-width="1.4" fill="none"/><rect x="7" y="8" width="8" height="6" fill="#fff" opacity="0.6"/><rect x="14" y="14" width="10" height="10" rx="2" fill="#4f8f4f"/><path d="M19.0 16 V22 M16 19.0 H22" stroke="#fff" stroke-width="2"/></svg>
<svg style="position:absolute;left:16px;top:411px;" width="24" height="24" viewBox="0 0 24 24"><circle cx="11" cy="11" r="10" fill="#eaf2fb" stroke="#5d8fc4" stroke-width="1.2"/><path d="M2 7 H20 M1 11 H21 M2 15 H20 M11 1 V21 M6 2 Q3 11 6 20 M16 2 Q19 11 16 20" stroke="#8fb3dc" stroke-width="0.8" fill="none"/><path d="M5 5 L10 17 L14 6 L19 6" fill="none" stroke="#222" stroke-width="1.2"/><circle cx="5" cy="5" r="1.5" fill="#fff" stroke="#222"/><circle cx="14" cy="6" r="1.5" fill="#fff" stroke="#222"/><circle cx="19" cy="6" r="1.5" fill="#fff" stroke="#222"/><circle cx="10" cy="17" r="1.5" fill="#fff" stroke="#222"/><rect x="14" y="14" width="10" height="10" rx="2" fill="#4f8f4f"/><path d="M19.0 16 V22 M16 19.0 H22" stroke="#fff" stroke-width="2"/></svg>
<svg style="position:absolute;left:16px;top:441px;" width="24" height="24" viewBox="0 0 24 24"><path d="M10 2 Q16 0 17 6 Q17 13 7 19 Q12 12 11 9 Q6 9 7 5 Q8 2 10 2 Z" fill="#5d8fc4" stroke="#3c6a9a" stroke-width="0.8"/><rect x="15" y="15" width="9" height="9" rx="2" fill="#4f8f4f"/><path d="M19.5 17 V22 M17 19.5 H22" stroke="#fff" stroke-width="2"/></svg>
<svg style="position:absolute;left:10px;top:471px;" width="24" height="24" viewBox="0 0 24 24"><path d="M1 8 V22 H14" fill="none" stroke="#999" stroke-width="0.9"/><path d="M3 6 V20 H16" fill="none" stroke="#bbb" stroke-width="0.9"/><rect x="5" y="3" width="16" height="12" rx="2" fill="#555" stroke="#333" stroke-width="0.8"/><path d="M7 0 V3 M10 0 V3 M13 0 V3 M16 0 V3 M19 0 V3 M7 15 V18 M10 15 V18 M13 15 V18" stroke="#444" stroke-width="1.2"/><rect x="13" y="13" width="11" height="11" rx="1.5" fill="#c9a21a"/><path d="M18.5 15.0 V22.0 M15.5 16.7 L21.5 20.3 M15.5 20.3 L21.5 16.7" stroke="#fff" stroke-width="1.3"/><circle cx="18.5" cy="18.5" r="1.5" fill="#fff"/></svg>
<svg style="position:absolute;left:39px;top:471px;" width="10" height="24" viewBox="0 0 10 24"><path d="M1 10 H8 L4.5 14 Z" fill="#111"/></svg>
<svg style="position:absolute;left:16px;top:501px;" width="24" height="24" viewBox="0 0 24 24"><path d="M1 10 V23 H12" fill="none" stroke="#999" stroke-width="0.9"/><rect x="3" y="7" width="14" height="14" fill="#fafafa" stroke="#bbb" stroke-width="0.8"/><rect x="6" y="3" width="18" height="5" fill="#e8e22a"/><rect x="11" y="0" width="5" height="10" fill="#fff" stroke="#666" stroke-width="0.8"/><text x="7" y="20" font-family="Liberation Sans" font-size="10" fill="#3c6a9a">b</text><rect x="14" y="13" width="11" height="11" rx="1.5" fill="#c9a21a"/><path d="M19.5 15.0 V22.0 M16.5 16.7 L22.5 20.3 M16.5 20.3 L22.5 16.7" stroke="#fff" stroke-width="1.3"/><circle cx="19.5" cy="18.5" r="1.5" fill="#fff"/></svg>
<svg style="position:absolute;left:16px;top:531px;" width="24" height="24" viewBox="0 0 24 24"><path d="M1 8 V22 H14" fill="none" stroke="#999" stroke-width="0.9"/><path d="M3 6 V20 H16" fill="none" stroke="#bbb" stroke-width="0.9"/><rect x="5" y="3" width="16" height="12" rx="2" fill="#555" stroke="#333" stroke-width="0.8"/><path d="M7 0 V3 M10 0 V3 M13 0 V3 M16 0 V3 M19 0 V3 M7 15 V18 M10 15 V18 M13 15 V18" stroke="#444" stroke-width="1.2"/><rect x="13" y="13" width="11" height="11" rx="1.5" fill="#c9a21a"/><path d="M18.5 15.0 V22.0 M15.5 16.7 L21.5 20.3 M15.5 20.3 L21.5 16.7" stroke="#fff" stroke-width="1.3"/><circle cx="18.5" cy="18.5" r="1.5" fill="#fff"/></svg>
<div style="position:absolute;left:5px;top:558px;width:46px;height:1px;background:#d5d5d5"></div>
<svg style="position:absolute;left:9px;top:563px;" width="39" height="3" viewBox="0 0 39 3"><rect x="0" y="0" width="2" height="2" fill="#a8a8a8"/><rect x="0" y="0" width="1" height="1" fill="#ececec"/><rect x="4" y="0" width="2" height="2" fill="#a8a8a8"/><rect x="4" y="0" width="1" height="1" fill="#ececec"/><rect x="8" y="0" width="2" height="2" fill="#a8a8a8"/><rect x="8" y="0" width="1" height="1" fill="#ececec"/><rect x="12" y="0" width="2" height="2" fill="#a8a8a8"/><rect x="12" y="0" width="1" height="1" fill="#ececec"/><rect x="16" y="0" width="2" height="2" fill="#a8a8a8"/><rect x="16" y="0" width="1" height="1" fill="#ececec"/><rect x="20" y="0" width="2" height="2" fill="#a8a8a8"/><rect x="20" y="0" width="1" height="1" fill="#ececec"/><rect x="24" y="0" width="2" height="2" fill="#a8a8a8"/><rect x="24" y="0" width="1" height="1" fill="#ececec"/><rect x="28" y="0" width="2" height="2" fill="#a8a8a8"/><rect x="28" y="0" width="1" height="1" fill="#ececec"/><rect x="32" y="0" width="2" height="2" fill="#a8a8a8"/><rect x="32" y="0" width="1" height="1" fill="#ececec"/><rect x="36" y="0" width="2" height="2" fill="#a8a8a8"/><rect x="36" y="0" width="1" height="1" fill="#ececec"/></svg>
<svg style="position:absolute;left:16px;top:572px;" width="24" height="24" viewBox="0 0 24 24"><path d="M12.5 0 V23 M0 12.5 H23" stroke="#333" stroke-width="1"/><circle cx="14" cy="14" r="4.5" fill="none" stroke="#c33" stroke-width="1.6" stroke-dasharray="2.5 1.5"/></svg>
<svg style="position:absolute;left:16px;top:602px;" width="24" height="24" viewBox="0 0 24 24"><circle cx="7" cy="3" r="2.2" fill="#fff" stroke="#444" stroke-width="1"/><path d="M7 5 L3 12 Q2 17 7 19 M7 5 L11 13" fill="none" stroke="#333" stroke-width="1.3"/><rect x="10" y="12" width="13" height="12" rx="2" fill="#3d5a70"/><path d="M14 15 V21 M13.5 18 H21 M17 16 L14.5 18 L17 20" stroke="#fff" stroke-width="1.2" fill="none"/></svg>
<svg style="position:absolute;left:16px;top:633px;" width="24" height="24" viewBox="0 0 24 24"><rect x="6" y="3" width="18" height="5" fill="#e8e22a"/><rect x="11" y="0" width="5" height="10" fill="#fff" stroke="#666" stroke-width="0.8"/><path d="M9 11 Q7 13 9 15" stroke="#ccc" fill="none"/><text x="0" y="20" font-family="Liberation Sans" font-size="10" fill="#3c6a9a">b</text></svg>
<svg style="position:absolute;left:16px;top:662px;" width="24" height="24" viewBox="0 0 24 24"><path d="M1 1 L6 21" stroke="#4a7ab8" stroke-width="1"/><circle cx="1" cy="1" r="1.3" fill="#fff" stroke="#4a7ab8" stroke-width="0.8"/><circle cx="6" cy="21" r="1.3" fill="#fff" stroke="#4a7ab8" stroke-width="0.8"/><path d="M10 3 Q15 0 21 3 Q23 10 19 13 L14 12 Q9 8 10 3Z" fill="none" stroke="#333" stroke-width="1.2"/><path d="M10 21 L15 6 L20 4" fill="none" stroke="#e22" stroke-width="1.2"/><circle cx="15" cy="6" r="1.4" fill="#fff" stroke="#e22"/><circle cx="20" cy="4" r="1.4" fill="#fff" stroke="#e22"/><circle cx="10" cy="21" r="1.4" fill="#fff" stroke="#e22"/><circle cx="17" cy="10" r="1.3" fill="#fff" stroke="#e22"/><circle cx="13" cy="22" r="1.2" fill="#fff" stroke="#4a7ab8"/><circle cx="16" cy="19" r="1.2" fill="#fff" stroke="#4a7ab8"/></svg>
<svg style="position:absolute;left:17px;top:693px;" width="24" height="24" viewBox="0 0 24 24"><rect x="1" y="2" width="19" height="19" fill="#1aa3f2" stroke="#222" stroke-width="1.2"/><path d="M1 12 L9 12 L14 1 M9 12 L19 22" stroke="#222" stroke-width="1.2" fill="none"/><circle cx="9" cy="12" r="2" fill="#fff" stroke="#222" stroke-width="0.8"/><circle cx="14" cy="2" r="2" fill="#fff" stroke="#222" stroke-width="0.8"/><circle cx="19" cy="21" r="2" fill="#fff" stroke="#222" stroke-width="0.8"/><circle cx="1" cy="12" r="2" fill="#fff" stroke="#222" stroke-width="0.8"/></svg>
<svg style="position:absolute;left:16px;top:723px;" width="24" height="24" viewBox="0 0 24 24"><rect x="1" y="4" width="21" height="17" fill="#fff" stroke="#6a8ac0" stroke-width="1.2"/><rect x="1" y="4" width="21" height="3" fill="#4f7ac0"/><path d="M4 10 H10 M4 13 H10 M4 16 H18" stroke="#e55" stroke-width="1"/><path d="M5 17 L19 3 L22 6 L8 20 L4 21 Z" fill="#f0a030" stroke="#a86a10" stroke-width="0.8"/></svg>
<svg style="position:absolute;left:9px;top:904px;" width="3" height="27" viewBox="0 0 3 27"><rect x="0" y="0" width="2" height="2" fill="#a8a8a8"/><rect x="0" y="0" width="1" height="1" fill="#ececec"/><rect x="0" y="4" width="2" height="2" fill="#a8a8a8"/><rect x="0" y="4" width="1" height="1" fill="#ececec"/><rect x="0" y="8" width="2" height="2" fill="#a8a8a8"/><rect x="0" y="8" width="1" height="1" fill="#ececec"/><rect x="0" y="12" width="2" height="2" fill="#a8a8a8"/><rect x="0" y="12" width="1" height="1" fill="#ececec"/><rect x="0" y="16" width="2" height="2" fill="#a8a8a8"/><rect x="0" y="16" width="1" height="1" fill="#ececec"/><rect x="0" y="20" width="2" height="2" fill="#a8a8a8"/><rect x="0" y="20" width="1" height="1" fill="#ececec"/><rect x="0" y="24" width="2" height="2" fill="#a8a8a8"/><rect x="0" y="24" width="1" height="1" fill="#ececec"/></svg>
<svg style="position:absolute;left:18px;top:905px;" width="24" height="24" viewBox="0 0 24 24"><path d="M11 1 Q4 1 4 4 V8 H11 V9 H3 Q0 9 0 14 Q0 19 3 19 H5 V15 Q5 12 8 12 H14 Q17 12 17 9 V4 Q17 1 11 1 Z" fill="#3b74a8"/><circle cx="8" cy="4" r="1" fill="#fff"/><path d="M11 23 Q18 23 18 20 V16 H11 V15 H19 Q22 15 22 10 Q22 5 19 5 H17 V9 Q17 12 14 12 H8 Q5 12 5 15 V20 Q5 23 11 23 Z" fill="#f7d13c"/><path d="M14 17 L22 20 L14 23" fill="none" stroke="#333" stroke-width="1.4"/></svg>
<svg style="position:absolute;left:49px;top:905px;" width="24" height="24" viewBox="0 0 24 24"><path d="M1 1 L23 23 H1 Z" fill="#f7a05a" stroke="#b8652a" stroke-width="0.8"/><path d="M5 10 L15 20 H5 Z" fill="#f0f0f0" stroke="#b8652a" stroke-width="0.6"/><rect x="15" y="1" width="7" height="17" fill="#f3de6a" stroke="#a89030" stroke-width="0.7"/><path d="M18 4 H22 M19 7 H22 M18 10 H22 M19 13 H22" stroke="#a89030" stroke-width="0.7"/></svg>
<svg style="position:absolute;left:80px;top:905px;" width="24" height="24" viewBox="0 0 24 24"><rect x="0" y="2" width="24" height="21" fill="#fff"/><text x="12" y="20" font-family="Liberation Sans" font-weight="bold" font-size="13.5" fill="#1a9ee6" text-anchor="middle">AC</text></svg>
<svg style="position:absolute;left:111px;top:905px;" width="24" height="24" viewBox="0 0 24 24"><path d="M6 0 H18 L24 6 V18 L18 24 H6 L0 18 V6 Z" fill="#2b8a8c"/><path d="M4 3 Q8 7 12 7 Q16 7 20 3 L19 12 Q16 16 13 21 L11 21 Q8 16 5 12 Z" fill="#e8de3a"/></svg>
<svg style="position:absolute;left:142px;top:905px;" width="24" height="24" viewBox="0 0 24 24"><path d="M1 0 V23 M23 0 V23 M0 23.5 H24" stroke="#444" stroke-width="1.2"/><path d="M1 3 H23 M1 10 H23 M1 17 H23" stroke="#555" stroke-width="0.8"/><circle cx="11" cy="3" r="2.2" fill="#fff" stroke="#d22" stroke-width="1.2"/><circle cx="17" cy="3" r="2.2" fill="#fff" stroke="#d22" stroke-width="1.2"/><circle cx="5" cy="10" r="2.2" fill="#cfc" stroke="#5a5" stroke-width="1"/><circle cx="5" cy="17" r="2.2" fill="#cdf" stroke="#47a" stroke-width="1"/><rect x="8" y="7" width="10" height="9" rx="2" fill="#3b5aa0"/><rect x="12" y="12" width="11" height="10" rx="2" fill="#e0b82a"/></svg>
<svg style="position:absolute;left:173px;top:905px;" width="24" height="24" viewBox="0 0 24 24"><circle cx="12" cy="12" r="11.5" fill="#45a3d6"/><text x="12" y="15.5" font-family="Liberation Sans" font-weight="bold" font-size="9.5" fill="#fff" text-anchor="middle">wkt</text></svg>
<svg style="position:absolute;left:205px;top:905px;" width="24" height="24" viewBox="0 0 24 24"><rect x="0" y="1" width="22" height="21" fill="#ece9d8" stroke="#bbb" stroke-width="0.6"/><rect x="0" y="1" width="22" height="3" fill="#4a7ec8"/><path d="M2 8 H8 M10 8 H16 M18 8 H21" stroke="#777" stroke-width="1"/><path d="M3 15 L6 12 V18 Z M19 15 L16 12 V18 Z" fill="#5ab85a"/><rect x="5" y="14" width="4" height="2" fill="#5ab85a"/><rect x="13" y="14" width="4" height="2" fill="#5ab85a"/></svg>
<svg style="position:absolute;left:235px;top:905px;" width="24" height="24" viewBox="0 0 24 24"><circle cx="12" cy="12" r="11.3" fill="#ddd" stroke="#555" stroke-width="1"/><circle cx="12" cy="12" r="9.5" fill="#d81e1e"/><path d="M8 5 H13 Q18 5 18 10 Q18 14 13 14 H12 V19 H8 Z" fill="#fff"/><circle cx="13" cy="9.5" r="1.6" fill="#d81e1e"/></svg>
<svg style="position:absolute;left:265px;top:905px;" width="24" height="24" viewBox="0 0 24 24"><circle cx="10" cy="10" r="9" fill="#6a9ad6"/><circle cx="12" cy="10" r="6" fill="#fff"/><circle cx="13" cy="10.5" r="3.5" fill="#6a9ad6"/><path transform="translate(11,9) scale(0.85)" d="M0 0 L0 13 L3 10 L5.5 15 L7.5 14 L5 9 L9 9 Z" fill="#fff" stroke="#222" stroke-width="1"/></svg>
<svg style="position:absolute;left:297px;top:905px;" width="24" height="24" viewBox="0 0 24 24"><path d="M6 9 A8 8 0 1 1 10 20 L9 17 A5 5 0 1 0 8 11 Z" fill="#3a8ae0"/><path d="M1 9 L9 5 L9 14 Z" fill="#3a8ae0"/><ellipse cx="12" cy="22" rx="6" ry="1.5" fill="#ccc"/></svg>
<svg style="position:absolute;left:328px;top:905px;" width="24" height="24" viewBox="0 0 24 24"><path d="M3 11 A9 8 0 0 1 19 6 L22 3 V12 H13 L16 9 A5.5 5 0 0 0 7 11 Z" fill="#4a92e0"/><path d="M2 12 L6 17 L9 12 Z" fill="#4a92e0"/><path d="M8 9 L20 21" stroke="#b07828" stroke-width="3.5"/><path d="M6 14 L13 7 L16 10 L9 17 Z" fill="#999" stroke="#666" stroke-width="0.8"/></svg>
<svg style="position:absolute;left:360px;top:905px;" width="24" height="24" viewBox="0 0 24 24"><rect x="0" y="0" width="24" height="24" fill="#fff"/><ellipse cx="8" cy="12" rx="6.5" ry="9" fill="#e3ef8a" stroke="#999" stroke-width="0.6"/><path d="M13 8 Q23 6 22 14 Q21 22 12 23 Q10 14 13 8 Z" fill="#9ad060"/><path d="M3 21 L20 2" stroke="#1b8a1b" stroke-width="1.8"/><path d="M21 1 L15 3 L19 7 Z" fill="#1b8a1b"/></svg>
<svg style="position:absolute;left:391px;top:905px;" width="24" height="24" viewBox="0 0 24 24"><path d="M22 0 Q20 8 10 16 L4 21 Q10 10 22 0 Z" fill="#bbb"/><circle cx="12" cy="13" r="6.5" fill="#c93838"/><ellipse cx="12" cy="15" rx="9.5" ry="3.5" fill="none" stroke="#2a7a2a" stroke-width="1.6"/></svg>
<svg style="position:absolute;left:421px;top:905px;" width="24" height="24" viewBox="0 0 24 24"><text x="0" y="11" font-family="Liberation Sans" font-weight="bold" font-size="13" fill="#000">W</text><text x="8" y="19" font-family="Liberation Sans" font-weight="bold" font-size="12" fill="#e82020">K</text><text x="14" y="23" font-family="Liberation Sans" font-weight="bold" font-size="11" fill="#000">T</text></svg>
<svg style="position:absolute;left:452px;top:905px;" width="24" height="24" viewBox="0 0 24 24"><rect x="4" y="0" width="3" height="6" rx="1" fill="#8aa8d8" stroke="#333" stroke-width="0.7"/><path d="M1 9 Q1 5 5 5 Q9 5 9 9 V23 H1 Z" fill="#8aa8d8" stroke="#333" stroke-width="0.9"/><rect x="3" y="9" width="7" height="4" rx="1.5" fill="#f4e26a" stroke="#333" stroke-width="0.6"/><rect x="3" y="16" width="5" height="3" fill="#f4e26a" stroke="#333" stroke-width="0.5"/><path d="M11 3 Q16 0 20 3 L22 8 V23 H14 V9 Z" fill="#c8b0c8" stroke="#555" stroke-width="0.8"/><rect x="14" y="13" width="8" height="10" fill="#b0b8e0" opacity="0.7"/></svg>
<svg style="position:absolute;left:485px;top:905px;" width="22" height="24" viewBox="0 0 22 24"><ellipse cx="11" cy="13" rx="6" ry="7" fill="#6aaa3a" stroke="#3a7a1a" stroke-width="1"/><path d="M3 6 L7 9 M19 6 L15 9 M1 13 H5 M17 13 H21 M3 20 L7 17 M19 20 L15 17 M8 3 L10 6 M14 3 L12 6" stroke="#3a8a2a" stroke-width="1.3"/></svg>
<svg style="position:absolute;left:513px;top:905px;" width="24" height="24" viewBox="0 0 24 24"><rect x="4" y="0" width="3" height="6" rx="1" fill="#8aa8d8" stroke="#333" stroke-width="0.7"/><path d="M1 9 Q1 5 5 5 Q9 5 9 9 V23 H1 Z" fill="#8aa8d8" stroke="#333" stroke-width="0.9"/><rect x="3" y="9" width="7" height="4" rx="1.5" fill="#f4e26a" stroke="#333" stroke-width="0.6"/><rect x="3" y="16" width="5" height="3" fill="#f4e26a" stroke="#333" stroke-width="0.5"/><path d="M12 6 Q14 2 17 3 L18 12 L15 12 Z" fill="#c9a0a0"/><rect x="18" y="2" width="3" height="21" rx="1" fill="#8aa8d8" stroke="#333" stroke-width="0.7"/></svg>
<div style="position:absolute;left:543px;top:902px;width:1px;height:29px;background:#b4b4b4"></div>
<div style="position:absolute;left:544px;top:902px;width:1px;height:29px;background:#fdfdfd"></div>
<svg style="position:absolute;left:548px;top:904px;" width="3" height="27" viewBox="0 0 3 27"><rect x="0" y="0" width="2" height="2" fill="#a8a8a8"/><rect x="0" y="0" width="1" height="1" fill="#ececec"/><rect x="0" y="4" width="2" height="2" fill="#a8a8a8"/><rect x="0" y="4" width="1" height="1" fill="#ececec"/><rect x="0" y="8" width="2" height="2" fill="#a8a8a8"/><rect x="0" y="8" width="1" height="1" fill="#ececec"/><rect x="0" y="12" width="2" height="2" fill="#a8a8a8"/><rect x="0" y="12" width="1" height="1" fill="#ececec"/><rect x="0" y="16" width="2" height="2" fill="#a8a8a8"/><rect x="0" y="16" width="1" height="1" fill="#ececec"/><rect x="0" y="20" width="2" height="2" fill="#a8a8a8"/><rect x="0" y="20" width="1" height="1" fill="#ececec"/><rect x="0" y="24" width="2" height="2" fill="#a8a8a8"/><rect x="0" y="24" width="1" height="1" fill="#ececec"/></svg>
<svg style="position:absolute;left:556px;top:905px;" width="24" height="24" viewBox="0 0 24 24"><circle cx="3.4" cy="5.4" r="2.1" fill="#eef4fa" stroke="#3d6a96" stroke-width="1.3"/><circle cx="12" cy="2.7" r="2.1" fill="#eef4fa" stroke="#e8202a" stroke-width="1.3"/><circle cx="22.3" cy="2.7" r="2.1" fill="#eef4fa" stroke="#3d6a96" stroke-width="1.3"/><circle cx="7.2" cy="12.5" r="2.1" fill="#eef4fa" stroke="#3d6a96" stroke-width="1.3"/><circle cx="15.5" cy="10" r="2.1" fill="#eef4fa" stroke="#e8202a" stroke-width="1.3"/><circle cx="5.8" cy="20.4" r="2.1" fill="#eef4fa" stroke="#3d6a96" stroke-width="1.3"/><rect x="15" y="14.5" width="10" height="10" rx="2" fill="#f8d92e"/><text x="20.0" y="23.0" font-family="Liberation Sans" font-weight="bold" font-size="8.5" fill="#b9a85a" text-anchor="middle">S</text></svg>
<svg style="position:absolute;left:588px;top:905px;" width="24" height="24" viewBox="0 0 24 24"><path d="M7 20 L20 7" fill="none" stroke="#3d6a96" stroke-width="1.2"/><path d="M2 14 L12 3 M1 13 L3 15 M11 2 L13 4" stroke="#e8202a" stroke-width="1.3" fill="none"/><text x="5" y="10" transform="rotate(-45 7 8)" font-family="Liberation Sans" font-weight="bold" font-size="5" fill="#e8202a">X,Y m</text><circle cx="7" cy="20" r="2.1" fill="#eef4fa" stroke="#3d6a96" stroke-width="1.3"/><circle cx="20" cy="7" r="2.1" fill="#eef4fa" stroke="#3d6a96" stroke-width="1.3"/><rect x="14" y="14.5" width="10" height="10" rx="2" fill="#4f8f4f"/><path d="M19.0 16.5 V22.5 M16 19.5 H22" stroke="#fff" stroke-width="2"/></svg>
<div style="position:absolute;left:617px;top:902px;width:1px;height:29px;background:#b4b4b4"></div>
<div style="position:absolute;left:618px;top:902px;width:1px;height:29px;background:#fdfdfd"></div>
<svg style="position:absolute;left:622px;top:904px;" width="3" height="27" viewBox="0 0 3 27"><rect x="0" y="0" width="2" height="2" fill="#a8a8a8"/><rect x="0" y="0" width="1" height="1" fill="#ececec"/><rect x="0" y="4" width="2" height="2" fill="#a8a8a8"/><rect x="0" y="4" width="1" height="1" fill="#ececec"/><rect x="0" y="8" width="2" height="2" fill="#a8a8a8"/><rect x="0" y="8" width="1" height="1" fill="#ececec"/><rect x="0" y="12" width="2" height="2" fill="#a8a8a8"/><rect x="0" y="12" width="1" height="1" fill="#ececec"/><rect x="0" y="16" width="2" height="2" fill="#a8a8a8"/><rect x="0" y="16" width="1" height="1" fill="#ececec"/><rect x="0" y="20" width="2" height="2" fill="#a8a8a8"/><rect x="0" y="20" width="1" height="1" fill="#ececec"/><rect x="0" y="24" width="2" height="2" fill="#a8a8a8"/><rect x="0" y="24" width="1" height="1" fill="#ececec"/></svg>
<svg style="position:absolute;left:633px;top:905px;" width="20" height="24" viewBox="0 0 20 24"><text x="10" y="9" font-family="Liberation Sans" font-weight="bold" font-size="7.5" fill="#222" text-anchor="middle">OGR</text><path d="M1 16 L10 11 L19 16 L10 21 Z" fill="#1a78c8"/><path d="M1 16 V18 L10 23 L19 18 V16 L10 21 Z" fill="#777"/><path d="M10 11 V16 M7 14 L10 17 L13 14" stroke="#fff" stroke-width="1.4" fill="none"/></svg>
<svg style="position:absolute;left:661px;top:905px;" width="24" height="24" viewBox="0 0 24 24"><circle cx="12" cy="11.5" r="11" fill="#6aa0e0" stroke="#3a78c8" stroke-width="0.8"/><ellipse cx="12" cy="11.5" rx="5" ry="11" fill="#4a88d8"/><path d="M2 8 H22 M2 15 H22" stroke="#aac8f0" stroke-width="1.2"/><rect x="2" y="6" width="5" height="11" fill="#888" opacity="0.6"/><rect x="17" y="6" width="5" height="11" fill="#888" opacity="0.6"/><rect x="15" y="15" width="9" height="9" rx="2" fill="#4f8f4f"/><path d="M19.5 17 V22 M17 19.5 H22" stroke="#fff" stroke-width="2"/><path d="M18 20.5 H25 L21.5 24.5 Z" fill="#000"/></svg>
<div style="position:absolute;left:692px;top:902px;width:1px;height:29px;background:#b4b4b4"></div>
<div style="position:absolute;left:693px;top:902px;width:1px;height:29px;background:#fdfdfd"></div>
<svg style="position:absolute;left:696px;top:904px;" width="3" height="27" viewBox="0 0 3 27"><rect x="0" y="0" width="2" height="2" fill="#a8a8a8"/><rect x="0" y="0" width="1" height="1" fill="#ececec"/><rect x="0" y="4" width="2" height="2" fill="#a8a8a8"/><rect x="0" y="4" width="1" height="1" fill="#ececec"/><rect x="0" y="8" width="2" height="2" fill="#a8a8a8"/><rect x="0" y="8" width="1" height="1" fill="#ececec"/><rect x="0" y="12" width="2" height="2" fill="#a8a8a8"/><rect x="0" y="12" width="1" height="1" fill="#ececec"/><rect x="0" y="16" width="2" height="2" fill="#a8a8a8"/><rect x="0" y="16" width="1" height="1" fill="#ececec"/><rect x="0" y="20" width="2" height="2" fill="#a8a8a8"/><rect x="0" y="20" width="1" height="1" fill="#ececec"/><rect x="0" y="24" width="2" height="2" fill="#a8a8a8"/><rect x="0" y="24" width="1" height="1" fill="#ececec"/></svg>
<svg style="position:absolute;left:705px;top:905px;" width="24" height="24" viewBox="0 0 24 24"><path d="M4.4 21 L2 14.7" fill="none" stroke="#3d6a96" stroke-width="1.2"/><path d="M2 14.7 L7.6 5.7 L13 2" fill="none" stroke="#e8202a" stroke-width="1.2"/><path d="M13 2 L20 2.5 L21.7 10.7" fill="none" stroke="#3d6a96" stroke-width="1.2"/><circle cx="4.4" cy="21" r="2.1" fill="#eef4fa" stroke="#3d6a96" stroke-width="1.3"/><circle cx="2" cy="14.7" r="2.1" fill="#eef4fa" stroke="#3d6a96" stroke-width="1.3"/><circle cx="7.6" cy="5.7" r="2.1" fill="#eef4fa" stroke="#e8202a" stroke-width="1.3"/><circle cx="13" cy="2" r="2.1" fill="#eef4fa" stroke="#e8202a" stroke-width="1.3"/><circle cx="20" cy="2.5" r="2.1" fill="#eef4fa" stroke="#3d6a96" stroke-width="1.3"/><circle cx="21.7" cy="10.7" r="2.1" fill="#eef4fa" stroke="#3d6a96" stroke-width="1.3"/><rect x="13.5" y="14.5" width="10" height="10" rx="2" fill="#f8d92e"/><text x="18.5" y="23.0" font-family="Liberation Sans" font-weight="bold" font-size="8.5" fill="#b9a85a" text-anchor="middle">S</text></svg>
<svg style="position:absolute;left:736px;top:905px;" width="24" height="24" viewBox="0 0 24 24"><path d="M1 20 L4 11 L7 2 L14 2 L21 2" fill="none" stroke="#3d6a96" stroke-width="1.2"/><circle cx="1" cy="20" r="2.1" fill="#eef4fa" stroke="#3d6a96" stroke-width="1.3"/><circle cx="4" cy="11" r="2.1" fill="#eef4fa" stroke="#3d6a96" stroke-width="1.3"/><circle cx="7" cy="2" r="2.1" fill="#eef4fa" stroke="#5aa0dc" stroke-width="1.3"/><circle cx="14" cy="2" r="2.1" fill="#eef4fa" stroke="#3d6a96" stroke-width="1.3"/><circle cx="21" cy="2" r="2.1" fill="#eef4fa" stroke="#3d6a96" stroke-width="1.3"/><rect x="13.5" y="14.5" width="10" height="10" rx="2" fill="#4f8f4f"/><path d="M18.5 16.5 V22.5 M15.5 19.5 H21.5" stroke="#fff" stroke-width="2"/></svg>
<div style="position:absolute;left:766px;top:906px;width:1px;height:22px;background:#b4b4b4"></div>
<div style="position:absolute;left:767px;top:906px;width:1px;height:22px;background:#fdfdfd"></div>
<svg style="position:absolute;left:772px;top:905px;" width="24" height="24" viewBox="0 0 24 24"><circle cx="3.4" cy="5.4" r="2.1" fill="#eef4fa" stroke="#3d6a96" stroke-width="1.3"/><circle cx="12" cy="2.7" r="2.1" fill="#eef4fa" stroke="#e8202a" stroke-width="1.3"/><circle cx="22.3" cy="2.7" r="2.1" fill="#eef4fa" stroke="#3d6a96" stroke-width="1.3"/><circle cx="7.2" cy="12.5" r="2.1" fill="#eef4fa" stroke="#3d6a96" stroke-width="1.3"/><circle cx="15.5" cy="10" r="2.1" fill="#eef4fa" stroke="#e8202a" stroke-width="1.3"/><circle cx="5.8" cy="20.4" r="2.1" fill="#eef4fa" stroke="#3d6a96" stroke-width="1.3"/><rect x="14.5" y="14.5" width="10" height="10" rx="2" fill="#f8d92e"/><text x="19.5" y="23.0" font-family="Liberation Sans" font-weight="bold" font-size="8.5" fill="#b9a85a" text-anchor="middle">S</text></svg>
<svg style="position:absolute;left:804px;top:905px;" width="24" height="24" viewBox="0 0 24 24"><path d="M1 3 Q12 -1 23 3" fill="none" stroke="#5aa0dc" stroke-width="1.2"/><path d="M8 5 Q2 12 4 22 M8 5 Q13 12 12 18" fill="none" stroke="#5aa0dc" stroke-width="1.2"/><circle cx="8" cy="5" r="2.1" fill="#eef4fa" stroke="#3d6a96" stroke-width="1.3"/><rect x="14.5" y="14.5" width="10" height="10" rx="2" fill="#4f8f4f"/><path d="M19.5 16.5 V22.5 M16.5 19.5 H22.5" stroke="#fff" stroke-width="2"/></svg>
<div style="position:absolute;left:834px;top:902px;width:1px;height:29px;background:#b4b4b4"></div>
<div style="position:absolute;left:835px;top:902px;width:1px;height:29px;background:#fdfdfd"></div>
<svg style="position:absolute;left:840px;top:905px;" width="24" height="24" viewBox="0 0 24 24"><path d="M2 10 L9 2" fill="none" stroke="#3d6a96" stroke-width="1.2"/><path d="M9 2 L15 9" fill="none" stroke="#3d6a96" stroke-width="1.2"/><path d="M2 10 L3 20" fill="none" stroke="#e8202a" stroke-width="1.2"/><circle cx="2" cy="2.5" r="2.1" fill="#eef4fa" stroke="#e8202a" stroke-width="1.3"/><circle cx="9" cy="2" r="2.1" fill="#eef4fa" stroke="#e8202a" stroke-width="1.3"/><circle cx="15" cy="9" r="2.1" fill="#eef4fa" stroke="#3d6a96" stroke-width="1.3"/><circle cx="2" cy="10" r="2.1" fill="#eef4fa" stroke="#e8202a" stroke-width="1.3"/><circle cx="3" cy="20" r="2.1" fill="#eef4fa" stroke="#3d6a96" stroke-width="1.3"/><rect x="15" y="14.5" width="10" height="10" rx="2" fill="#f8d92e"/><text x="20.0" y="23.0" font-family="Liberation Sans" font-weight="bold" font-size="8.5" fill="#b9a85a" text-anchor="middle">S</text></svg>
<svg style="position:absolute;left:872px;top:905px;" width="24" height="24" viewBox="0 0 24 24"><path d="M2 2 L9 9 L17 2" fill="none" stroke="#3d6a96" stroke-width="1.2"/><path d="M9 9 L2 20" fill="none" stroke="#3d6a96" stroke-width="1.2"/><path d="M5 5 Q9 1 13 5" stroke="#e8202a" stroke-width="1.1" fill="none"/><circle cx="9" cy="5" r="0.7" fill="#e8202a"/><circle cx="2" cy="2" r="2.1" fill="#eef4fa" stroke="#3d6a96" stroke-width="1.3"/><circle cx="17" cy="2" r="2.1" fill="#eef4fa" stroke="#3d6a96" stroke-width="1.3"/><circle cx="9" cy="9" r="2.1" fill="#eef4fa" stroke="#5aa0dc" stroke-width="1.3"/><circle cx="2" cy="20" r="2.1" fill="#eef4fa" stroke="#3d6a96" stroke-width="1.3"/><rect x="14.5" y="14.5" width="10" height="10" rx="2" fill="#4f8f4f"/><path d="M19.5 16.5 V22.5 M16.5 19.5 H22.5" stroke="#fff" stroke-width="2"/></svg>
<div style="position:absolute;left:902px;top:902px;width:1px;height:29px;background:#b4b4b4"></div>
<div style="position:absolute;left:903px;top:902px;width:1px;height:29px;background:#fdfdfd"></div>
<svg style="position:absolute;left:908px;top:905px;" width="24" height="24" viewBox="0 0 24 24"><path d="M4 13 L9 2" fill="none" stroke="#e8202a" stroke-width="1.2"/><path d="M9 2 L20 11" fill="none" stroke="#3d6a96" stroke-width="1.2"/><path d="M4 13 L4 21" fill="none" stroke="#3d6a96" stroke-width="1.2"/><circle cx="9" cy="2" r="2.1" fill="#eef4fa" stroke="#e8202a" stroke-width="1.3"/><circle cx="4" cy="13" r="2.1" fill="#eef4fa" stroke="#e8202a" stroke-width="1.3"/><circle cx="20" cy="11" r="2.1" fill="#eef4fa" stroke="#3d6a96" stroke-width="1.3"/><circle cx="4" cy="21" r="2.1" fill="#eef4fa" stroke="#3d6a96" stroke-width="1.3"/><rect x="13.5" y="14.5" width="10" height="10" rx="2" fill="#f8d92e"/><text x="18.5" y="23.0" font-family="Liberation Sans" font-weight="bold" font-size="8.5" fill="#b9a85a" text-anchor="middle">S</text></svg>
<svg style="position:absolute;left:939px;top:905px;" width="24" height="24" viewBox="0 0 24 24"><path d="M3 4 L19 18" fill="none" stroke="#5aa0dc" stroke-width="1.2"/><path d="M2 21 L17 2" fill="none" stroke="#3d6a96" stroke-width="1.2"/><circle cx="3" cy="4" r="2.1" fill="#eef4fa" stroke="#5aa0dc" stroke-width="1.3"/><circle cx="19" cy="18" r="2.1" fill="#eef4fa" stroke="#5aa0dc" stroke-width="1.3"/><circle cx="10" cy="10" r="2.1" fill="#eef4fa" stroke="#5aa0dc" stroke-width="1.3"/><circle cx="17" cy="2" r="2.1" fill="#eef4fa" stroke="#3d6a96" stroke-width="1.3"/><circle cx="2" cy="21" r="2.1" fill="#eef4fa" stroke="#3d6a96" stroke-width="1.3"/><rect x="14.5" y="14.5" width="10" height="10" rx="2" fill="#4f8f4f"/><path d="M19.5 16.5 V22.5 M16.5 19.5 H22.5" stroke="#fff" stroke-width="2"/></svg>
<div style="position:absolute;left:970px;top:902px;width:1px;height:29px;background:#b4b4b4"></div>
<div style="position:absolute;left:971px;top:902px;width:1px;height:29px;background:#fdfdfd"></div>
<svg style="position:absolute;left:977px;top:905px;" width="24" height="24" viewBox="0 0 24 24"><circle cx="2" cy="5" r="2.1" fill="#eef4fa" stroke="#3d6a96" stroke-width="1.3"/><circle cx="12" cy="2" r="2.1" fill="#eef4fa" stroke="#e8202a" stroke-width="1.3"/><circle cx="22" cy="2.5" r="2.1" fill="#eef4fa" stroke="#3d6a96" stroke-width="1.3"/><circle cx="6" cy="12" r="2.1" fill="#eef4fa" stroke="#3d6a96" stroke-width="1.3"/><circle cx="14" cy="9" r="2.1" fill="#eef4fa" stroke="#e8202a" stroke-width="1.3"/><circle cx="4" cy="21" r="2.1" fill="#eef4fa" stroke="#3d6a96" stroke-width="1.3"/><rect x="14" y="14.5" width="10" height="10" rx="2" fill="#f8d92e"/><text x="19.0" y="23.0" font-family="Liberation Sans" font-weight="bold" font-size="8.5" fill="#b9a85a" text-anchor="middle">S</text></svg>
<svg style="position:absolute;left:1007px;top:905px;" width="24" height="24" viewBox="0 0 24 24"><circle cx="12" cy="2" r="2.1" fill="#eef4fa" stroke="#3d6a96" stroke-width="1.3"/><circle cx="6" cy="7" r="2.1" fill="#eef4fa" stroke="#5aa0dc" stroke-width="1.3"/><circle cx="10" cy="12" r="2.1" fill="#eef4fa" stroke="#3d6a96" stroke-width="1.3"/><circle cx="3" cy="14" r="2.1" fill="#eef4fa" stroke="#5aa0dc" stroke-width="1.3"/><circle cx="6" cy="21" r="2.1" fill="#eef4fa" stroke="#3d6a96" stroke-width="1.3"/><circle cx="9.5" cy="17" r="2.1" fill="#eef4fa" stroke="#5aa0dc" stroke-width="1.3"/><rect x="14.5" y="14.5" width="10" height="10" rx="2" fill="#4f8f4f"/><path d="M19.5 16.5 V22.5 M16.5 19.5 H22.5" stroke="#fff" stroke-width="2"/></svg>
<div style="position:absolute;left:1038px;top:902px;width:1px;height:29px;background:#b4b4b4"></div>
<div style="position:absolute;left:1039px;top:902px;width:1px;height:29px;background:#fdfdfd"></div>
<svg style="position:absolute;left:1045px;top:905px;" width="24" height="24" viewBox="0 0 24 24"><circle cx="2" cy="5" r="2.1" fill="#eef4fa" stroke="#3d6a96" stroke-width="1.3"/><circle cx="12" cy="2" r="2.1" fill="#eef4fa" stroke="#e8202a" stroke-width="1.3"/><circle cx="22" cy="2.5" r="2.1" fill="#eef4fa" stroke="#3d6a96" stroke-width="1.3"/><circle cx="6" cy="12" r="2.1" fill="#eef4fa" stroke="#3d6a96" stroke-width="1.3"/><circle cx="14" cy="9" r="2.1" fill="#eef4fa" stroke="#e8202a" stroke-width="1.3"/><circle cx="4" cy="21" r="2.1" fill="#eef4fa" stroke="#3d6a96" stroke-width="1.3"/><rect x="14" y="14.5" width="10" height="10" rx="2" fill="#f8d92e"/><text x="19.0" y="23.0" font-family="Liberation Sans" font-weight="bold" font-size="8.5" fill="#b9a85a" text-anchor="middle">S</text></svg>
<svg style="position:absolute;left:1076px;top:905px;" width="24" height="24" viewBox="0 0 24 24"><path d="M5 2 V21" stroke="#5aa0dc" stroke-width="1.1"/><path d="M4 21 L18 8" fill="none" stroke="#3d6a96" stroke-width="1.2"/><text x="10" y="8" font-family="Liberation Sans" font-weight="bold" font-size="7" fill="#e8202a" text-anchor="middle">Az</text><path d="M6 10 Q10 10 13 12" stroke="#e8202a" stroke-width="1" fill="none"/><path d="M11 10 L14 13 L10 13Z" fill="#e8202a"/><circle cx="4" cy="21" r="2.1" fill="#eef4fa" stroke="#3d6a96" stroke-width="1.3"/><circle cx="18" cy="8" r="2.1" fill="#eef4fa" stroke="#3d6a96" stroke-width="1.3"/><rect x="14.5" y="14.5" width="10" height="10" rx="2" fill="#4f8f4f"/><text x="19.5" y="23.0" font-family="Liberation Sans" font-weight="bold" font-size="8.5" fill="#fff" text-anchor="middle">?</text></svg>
<div style="position:absolute;left:1106px;top:902px;width:1px;height:29px;background:#b4b4b4"></div>
<div style="position:absolute;left:1107px;top:902px;width:1px;height:29px;background:#fdfdfd"></div>
<svg style="position:absolute;left:1113px;top:905px;" width="24" height="24" viewBox="0 0 24 24"><path d="M2 7 L9 2" fill="none" stroke="#3d6a96" stroke-width="1.2"/><path d="M2 21 L6 18 L19 4" fill="none" stroke="#e8202a" stroke-width="1.2"/><circle cx="2" cy="7" r="2.1" fill="#eef4fa" stroke="#3d6a96" stroke-width="1.3"/><circle cx="9" cy="2" r="2.1" fill="#eef4fa" stroke="#3d6a96" stroke-width="1.3"/><circle cx="19" cy="4" r="2.1" fill="#eef4fa" stroke="#e8202a" stroke-width="1.3"/><circle cx="6" cy="18" r="2.1" fill="#eef4fa" stroke="#e8202a" stroke-width="1.3"/><circle cx="2" cy="21" r="2.1" fill="#eef4fa" stroke="#e8202a" stroke-width="1.3"/><rect x="14" y="14.5" width="10" height="10" rx="2" fill="#f8d92e"/><text x="19.0" y="23.0" font-family="Liberation Sans" font-weight="bold" font-size="8.5" fill="#b9a85a" text-anchor="middle">S</text></svg>
<svg style="position:absolute;left:1144px;top:905px;" width="24" height="24" viewBox="0 0 24 24"><path d="M4 2 L1 20 L16 8" fill="none" stroke="#3d6a96" stroke-width="1.2"/><path d="M1 20 L17 7" fill="none" stroke="#5aa0dc" stroke-width="1.2"/><path d="M5 7 Q10 8 12 11" stroke="#e8202a" stroke-width="1" fill="none"/><path d="M10 9 L13 12 L9 12Z" fill="#e8202a"/><circle cx="4" cy="2" r="2.1" fill="#eef4fa" stroke="#3d6a96" stroke-width="1.3"/><circle cx="17" cy="7" r="2.1" fill="#eef4fa" stroke="#5aa0dc" stroke-width="1.3"/><circle cx="1" cy="20" r="2.1" fill="#eef4fa" stroke="#5aa0dc" stroke-width="1.3"/><rect x="14.5" y="14.5" width="10" height="10" rx="2" fill="#4f8f4f"/><path d="M19.5 16.5 V22.5 M16.5 19.5 H22.5" stroke="#fff" stroke-width="2"/></svg>
<div style="position:absolute;left:1174px;top:902px;width:1px;height:29px;background:#b4b4b4"></div>
<div style="position:absolute;left:1175px;top:902px;width:1px;height:29px;background:#fdfdfd"></div>
<svg style="position:absolute;left:1181px;top:905px;" width="24" height="24" viewBox="0 0 24 24"><path d="M6 2 L3 13" fill="none" stroke="#e8202a" stroke-width="1.2"/><path d="M6 2 L18 10" fill="none" stroke="#3d6a96" stroke-width="1.2"/><path d="M3 13 L4 21" fill="none" stroke="#3d6a96" stroke-width="1.2"/><circle cx="6" cy="2" r="2.1" fill="#eef4fa" stroke="#e8202a" stroke-width="1.3"/><circle cx="3" cy="13" r="2.1" fill="#eef4fa" stroke="#e8202a" stroke-width="1.3"/><circle cx="18" cy="10" r="2.1" fill="#eef4fa" stroke="#3d6a96" stroke-width="1.3"/><circle cx="4" cy="21" r="2.1" fill="#eef4fa" stroke="#3d6a96" stroke-width="1.3"/><rect x="13" y="14.5" width="10" height="10" rx="2" fill="#f8d92e"/><text x="18.0" y="23.0" font-family="Liberation Sans" font-weight="bold" font-size="8.5" fill="#b9a85a" text-anchor="middle">S</text></svg>
<svg style="position:absolute;left:1212px;top:905px;" width="24" height="24" viewBox="0 0 24 24"><path d="M1 16 L15 1" stroke="#5aa0dc" stroke-width="1"/><path d="M7 21 L21 4" fill="none" stroke="#3d6a96" stroke-width="1.2"/><circle cx="7" cy="21" r="2.1" fill="#eef4fa" stroke="#3d6a96" stroke-width="1.3"/><circle cx="21" cy="4" r="2.1" fill="#eef4fa" stroke="#3d6a96" stroke-width="1.3"/><rect x="14" y="14.5" width="10" height="10" rx="2" fill="#4f8f4f"/><path d="M19.0 16.5 V22.5 M16 19.5 H22" stroke="#fff" stroke-width="2"/></svg>
<div style="position:absolute;left:1242px;top:902px;width:1px;height:29px;background:#b4b4b4"></div>
<div style="position:absolute;left:1243px;top:902px;width:1px;height:29px;background:#fdfdfd"></div>
<svg style="position:absolute;left:1256px;top:905px;" width="10" height="24" viewBox="0 0 10 24"><text x="5" y="17" font-family="Liberation Sans" font-weight="bold" font-size="12" fill="#000" text-anchor="middle">»</text></svg>
<div class="t" style="left:11px;top:943px;font-size:11.3px;color:#000">Готово</div>
<div style="position:absolute;left:299px;top:939px;width:18px;height:18px;background:#e8e8e8;border:1px solid #a8a8a8"></div>
<svg style="position:absolute;left:300px;top:940px;" width="16" height="16" viewBox="0 0 16 16"><path d="M4 3 Q1 6 3 10 Q5 15 10 14 Q14 12 12 8 Q9 2 4 3 Z" fill="#fff" stroke="#222" stroke-width="1.2"/><circle cx="9" cy="11" r="2" fill="#222"/><path d="M6 4 L8 8" stroke="#222" stroke-width="1"/><path d="M12 2 L14 4 M14 6 L15 7" stroke="#555" stroke-width="0.8"/></svg>
<div class="t" style="left:326px;top:943px;font-size:11.5px;color:#000">Координаты:</div>
<div style="position:absolute;left:404px;top:938px;width:300px;height:20px;background:#fff;border:1px solid #abadb3"></div>
<div class="t" style="left:513px;top:943px;font-size:11.0px;color:#000">2319882,455937</div>
<div class="t" style="left:712px;top:943px;font-size:10.5px;color:#000">Масштаб</div>
<div style="position:absolute;left:770px;top:938px;width:84px;height:20px;background:#fff;border:1px solid #abadb3"></div>
<div class="t" style="left:776px;top:943px;font-size:11.2px;color:#000">1:26 368</div>
<svg style="position:absolute;left:841.5px;top:946px;" width="9" height="6" viewBox="0 0 9 6"><path d="M0.5 0.5 L4.5 4.5 L8.5 0.5" stroke="#333" stroke-width="1.4" fill="none"/></svg>
<div class="t" style="left:862px;top:943px;font-size:10.6px;color:#000">Вращение:</div>
<div style="position:absolute;left:927px;top:937px;width:94px;height:23px;background:#fff;border:1px solid #abadb3"></div>
<div class="t" style="left:931px;top:943px;font-size:11.4px;color:#000">0,0</div>
<div style="position:absolute;left:1005px;top:939px;width:14px;height:18px;background:#f2f2f2;border:1px solid #c4c4c4"></div>
<div style="position:absolute;left:1006px;top:947px;width:12px;height:1px;background:#c4c4c4"></div>
<svg style="position:absolute;left:1008px;top:941px;" width="8" height="14" viewBox="0 0 8 14"><path d="M1 4.5 L4 1.5 L7 4.5 Z M1 9.5 L4 12.5 L7 9.5 Z" fill="#222"/></svg>
<div style="position:absolute;left:1027px;top:943px;width:13px;height:13px;background:#fff;border:1px solid #333"></div>
<svg style="position:absolute;left:1028.5px;top:944.5px;" width="10" height="10" viewBox="0 0 10 10"><path d="M1.5 5 L4 8.5 L9 1.5" stroke="#000" stroke-width="1.8" fill="none"/></svg>
<div class="t" style="left:1044px;top:944px;font-size:10.9px;color:#000">Отрисовка</div>
<svg style="position:absolute;left:1117px;top:940px;" width="16" height="16" viewBox="0 0 16 16"><circle cx="8" cy="8" r="7.5" fill="#999"/><circle cx="8" cy="8" r="6" fill="#ccc"/><path d="M8 1 V15 M1 8 H15" stroke="#666" stroke-width="1"/><rect x="5" y="5" width="6" height="6" fill="#eee" stroke="#777" stroke-width="0.8"/></svg>
<div class="t" style="left:1137px;top:943.5px;font-size:10.3px;color:#000">USER:100025</div>
<div style="position:absolute;left:1216px;top:938px;width:33px;height:20px;background:#b9d8f6;border:1px solid #3d8ee0"></div>
<svg style="position:absolute;left:1223px;top:941px;" width="20" height="16" viewBox="0 0 20 16"><ellipse cx="9" cy="7" rx="7.5" ry="6" fill="#555"/><path d="M9 11 L15 15 L11 10 Z" fill="#555"/></svg>
<svg style="position:absolute;left:1257px;top:950px;" width="10" height="10" viewBox="0 0 10 10"><rect x="6" y="0" width="2" height="2" fill="#bbb"/><rect x="3" y="3" width="2" height="2" fill="#bbb"/><rect x="6" y="3" width="2" height="2" fill="#bbb"/><rect x="0" y="6" width="2" height="2" fill="#bbb"/><rect x="3" y="6" width="2" height="2" fill="#bbb"/><rect x="6" y="6" width="2" height="2" fill="#bbb"/></svg>
<div style="position:absolute;left:831px;top:129px;width:437px;height:616px;overflow:hidden"><svg width="437" height="616" viewBox="831 129 437 616" style="position:absolute;left:0;top:0"><polygon points="928.6,143.8 957.5,172.2 883.6,244.8 856.4,213.9" fill="#d6cc6a" stroke="#1c1c1c" stroke-width="1" /><line x1="872.2" y1="233.5" x2="854" y2="253.5" stroke="#1c1c1c" stroke-width="1.1"/><line x1="883.6" y1="244.8" x2="886" y2="249" stroke="#1c1c1c" stroke-width="1.1"/><polygon points="842,264 859.8,248.6 873.3,262 857.3,279.2" fill="#d6cc6a" stroke="#1c1c1c" stroke-width="1" /><polygon points="847.7,259.7 854.5,253 859.5,259 853,265.5" fill="#d6cc6a" stroke="#1c1c1c" stroke-width="1" fill="none"/><polygon points="886.3,265.4 909.6,265.4 909.6,290.2 886.3,290.2" fill="#d6cc6a" stroke="#1c1c1c" stroke-width="1" /><polygon points="880,290.6 889,290.6 889,299.3 880,299.3" fill="#d6cc6a" stroke="#1c1c1c" stroke-width="1" /><line x1="889" y1="290.4" x2="912" y2="290.4" stroke="#1c1c1c" stroke-width="0.9"/><path d="M920.3 276.1 L957.5 307 L885 381.5 Q879 384 872 380 Q866 375 862.2 360 L850.7 350.2 Z" fill="#d6cc6a" stroke="#1c1c1c" stroke-width="0.9"/><line x1="926" y1="281.5" x2="856.8" y2="355.6" stroke="#1c1c1c" stroke-width="0.9"/><line x1="932.7" y1="287.5" x2="862.8" y2="360.7" stroke="#1c1c1c" stroke-width="0.9"/><line x1="939.1" y1="292.9" x2="866.9" y2="366.1" stroke="#1c1c1c" stroke-width="0.9"/><polygon points="938.7,334.5 961.5,315.1 972.3,328.5 948.8,347.3" fill="#d6cc6a" stroke="#1c1c1c" stroke-width="1" /><polygon points="954.8,325.8 961.5,320.4 966.5,327.2 960.2,332.5" fill="#d6cc6a" stroke="#1c1c1c" stroke-width="1" fill="none"/><line x1="961.5" y1="311.7" x2="979.7" y2="337.2" stroke="#1c1c1c" stroke-width="1.1"/><polygon points="967.6,334.5 976.3,334.5 976.3,343.3 967.6,343.3" fill="#d6cc6a" stroke="#1c1c1c" stroke-width="1" /><polygon points="976.3,337.2 985,337.2 985,346 976.3,346" fill="#d6cc6a" stroke="#1c1c1c" stroke-width="1" /><polygon points="985,341.3 993.8,341.3 993.8,349.7 985,349.7" fill="#d6cc6a" stroke="#1c1c1c" stroke-width="1" /><line x1="993.8" y1="342.6" x2="1005.9" y2="335.9" stroke="#1c1c1c" stroke-width="1.1"/><polygon points="936,339.2 985.5,387.3 960.1,411.4 911.2,363.7" fill="#d6cc6a" stroke="#1c1c1c" stroke-width="1" /><polygon points="981.8,394.7 1025.8,442.4 999.8,468.5 954.5,420.7" fill="#d6cc6a" stroke="#1c1c1c" stroke-width="1" /><line x1="971.9" y1="404" x2="1016.5" y2="452.4" stroke="#1c1c1c" stroke-width="0.9"/><polygon points="941.6,432.9 988,479.6 919.5,546.5 876.6,496" fill="#d6cc6a" stroke="#1c1c1c" stroke-width="1" /><line x1="928.4" y1="446" x2="974.3" y2="493.2" stroke="#1c1c1c" stroke-width="0.9"/><line x1="919.3" y1="455.2" x2="964" y2="503" stroke="#1c1c1c" stroke-width="0.9"/><line x1="903" y1="470.9" x2="946.5" y2="520.5" stroke="#1c1c1c" stroke-width="0.9"/><line x1="886.5" y1="487" x2="929.2" y2="536.6" stroke="#1c1c1c" stroke-width="0.9"/><line x1="831.1" y1="452.3" x2="918.6" y2="550.6" stroke="#1c1c1c" stroke-width="1.3"/><polygon points="849.9,521.7 871.6,500 918.6,551.4 896.9,572.3 896.1,570.9 907,560 862.9,510.9 850.6,522.4" fill="#d6cc6a" stroke="#1c1c1c" stroke-width="1" /><polygon points="829,505.3 846.2,523.2 837.6,532.6 829,524" fill="#d6cc6a" stroke="#1c1c1c" stroke-width="1" /><polygon points="829,621.5 835.4,628.4 829,635.4" fill="#d6cc6a" stroke="#1c1c1c" stroke-width="1" /><rect x="867.6" y="441.7" width="1" height="1" fill="#666"/><rect x="882.8" y="454.3" width="1" height="1" fill="#666"/><rect x="897.4" y="466.3" width="1" height="1" fill="#666"/><rect x="912" y="478" width="1" height="1" fill="#666"/><rect x="853.5" y="430" width="1" height="1" fill="#666"/><rect x="1040" y="430" width="1" height="1" fill="#666"/><rect x="1026" y="416" width="1" height="1" fill="#666"/><rect x="1030" y="448" width="1" height="1" fill="#666"/><rect x="979" y="478" width="1" height="1" fill="#666"/><rect x="903" y="555" width="1" height="1" fill="#666"/></svg></div>
<svg style="position:absolute;left:1240px;top:756px;" width="9" height="9" viewBox="0 0 9 9"><rect x="3" y="0.75" width="5.25" height="4.5" fill="none" stroke="#000" stroke-width="1.5"/><rect x="0.75" y="3.75" width="5.25" height="4.5" fill="#d9d9d9" stroke="#000" stroke-width="1.5"/></svg>
<svg style="position:absolute;left:1256px;top:756px;" width="9" height="9" viewBox="0 0 9 9"><path d="M0.5 0.5 L8.5 8.5 M8.5 0.5 L0.5 8.5" stroke="#000" stroke-width="1.6"/></svg>
<div class="t" style="left:831px;top:813px;font-size:10.78px;color:#000">n/plugins\quick_map_services\custom_translator.py:40: UnicodeWarning: Unicode</div>
<div class="t" style="left:831px;top:826.3px;font-size:10.78px;color:#000">g unequal</div>
<div class="t" style="left:832px;top:839.8px;font-size:10.78px;color:#000">__translates.keys():</div>
<div style="position:absolute;left:1248px;top:798px;width:16px;height:97px;background:#f0f0f0"></div>
<div style="position:absolute;left:1248px;top:860px;width:16px;height:18px;background:#cdcdcd"></div>
<svg style="position:absolute;left:1251.5px;top:804.5px;" width="8" height="5" viewBox="0 0 8 5"><path d="M0.5 4.5 L4 1 L7.5 4.5" stroke="#606060" stroke-width="1.6" fill="none"/></svg>
<svg style="position:absolute;left:1251.5px;top:884.5px;" width="8" height="5" viewBox="0 0 8 5"><path d="M0.5 0.5 L4 4 L7.5 0.5" stroke="#606060" stroke-width="1.6" fill="none"/></svg>
<div style="position:absolute;left:69px;top:83px;width:762px;height:805px;background:#d9d9d9;border:1px solid #a9a9a9"></div>
<svg style="position:absolute;left:81px;top:91px;" width="12" height="14" viewBox="0 0 12 14"><ellipse cx="3.5" cy="8" rx="3.2" ry="5.5" fill="#e9f25a"/><ellipse cx="8.3" cy="9" rx="3.2" ry="5.2" fill="#e9f25a"/><path d="M3.5 10.5 L10.5 2" stroke="#0a8a0a" stroke-width="1.6"/><rect x="9" y="0.5" width="3" height="3" fill="#0a8a0a"/><path d="M0.5 11.5 H3 V14" stroke="#000" stroke-width="1.2" fill="none"/><path d="M8.5 10 L7.5 12 L9.5 13.5" stroke="#333" stroke-width="0.8" fill="none"/></svg>
<div class="t" style="left:100px;top:89.8px;font-size:15.3px;color:#1e1e1e;letter-spacing:-0.36px">Таблица атрибутов — doc19208369_Parcel :: Всего объектов: 54, скрыто фильтром: 54, в...</div>
<div style="position:absolute;left:735px;top:95px;width:8px;height:3px;background:#111"></div>
<div style="position:absolute;left:761px;top:90px;width:10px;height:8px;border:1px solid #111;border-top-width:2px"></div>
<div style="position:absolute;left:779px;top:84px;width:45px;height:20px;background:#c74f50"></div>
<svg style="position:absolute;left:798px;top:90px;" width="8" height="8" viewBox="0 0 8 8"><path d="M0 0 L8 8 M8 0 L0 8" stroke="#fff" stroke-width="1.6"/></svg>
<div style="position:absolute;left:76px;top:113px;width:747px;height:768px;background:#f0f0f0;border:1px solid #c9c9c9"></div>
<div class="t" style="left:770px;top:124px;font-size:10.7px;color:#000;">Справка</div>
<svg style="position:absolute;left:83px;top:120px;" width="18" height="18" viewBox="0 0 24 24"><g transform="rotate(35 12 12)"><rect x="9" y="1" width="6" height="15" fill="#e8d44d" stroke="#b8a430" stroke-width="0.8"/><rect x="11" y="1" width="2" height="15" fill="#fbf3a0" opacity="0.9"/><rect x="9" y="0" width="6" height="2" fill="#eee" stroke="#bbb" stroke-width="0.6"/><path d="M9 16 L15 16 L12 23 Z" fill="#ddd" stroke="#888" stroke-width="0.6"/><path d="M11 20.5 L13 20.5 L12 23Z" fill="#444"/></g></svg>
<svg style="position:absolute;left:111px;top:120px;" width="18" height="18" viewBox="0 0 24 24"><rect x="1" y="1" width="20" height="20" rx="2.5" fill="#bcbcbc" stroke="#a8a8a8" stroke-width="1"/><rect x="4" y="1.5" width="14" height="9" fill="#f7f7f7"/><path d="M6 4 H16 M6 6.5 H16 M6 9 H16" stroke="#444" stroke-width="0.8"/><rect x="5" y="13" width="12" height="7" fill="#eaeaea"/><rect x="7" y="14.5" width="2" height="4" fill="#3b5f8a"/><g transform="translate(6,4) scale(0.75)"><g transform="rotate(35 12 12)"><rect x="9" y="1" width="6" height="15" fill="#bdbdbd" stroke="#a0a0a0" stroke-width="0.8"/><rect x="11" y="1" width="2" height="15" fill="#fbf3a0" opacity="0.3"/><rect x="9" y="0" width="6" height="2" fill="#eee" stroke="#bbb" stroke-width="0.6"/><path d="M9 16 L15 16 L12 23 Z" fill="#ddd" stroke="#888" stroke-width="0.6"/><path d="M11 20.5 L13 20.5 L12 23Z" fill="#444"/></g></g></svg>
<div style="position:absolute;left:136px;top:117px;width:1px;height:25px;background:#a0a0a0"></div>
<div style="position:absolute;left:137px;top:117px;width:1px;height:25px;background:#fdfdfd"></div>
<svg style="position:absolute;left:146px;top:120px;" width="17" height="17" viewBox="0 0 24 24"><rect x="3" y="4" width="18" height="3" fill="#999"/><rect x="9" y="1" width="6" height="3" fill="none" stroke="#999" stroke-width="1.5"/><path d="M5 8 H19 L18 23 H6 Z" fill="#a0a0a0"/><path d="M9 10 V21 M12 10 V21 M15 10 V21" stroke="#e8e8e8" stroke-width="1.6"/></svg>
<div style="position:absolute;left:170px;top:117px;width:1px;height:25px;background:#a0a0a0"></div>
<div style="position:absolute;left:171px;top:117px;width:1px;height:25px;background:#fdfdfd"></div>
<svg style="position:absolute;left:179px;top:120px;" width="18" height="18" viewBox="0 0 24 24"><rect x="10.5" y="11.5" width="12" height="12" fill="#fbe34a" stroke="#b59b18" stroke-width="0.9" stroke-dasharray="1.5 1"/><g transform="translate(1,1) scale(0.82)"><path d="M12.5 3.5 Q11 1 7 1.2 Q2 1.8 2.5 5.5 Q3 8 7 8.5 Q1.5 9.2 1.5 13 Q2 17 7.5 17 Q11.5 17 13 14.5" fill="none" stroke="#5a2f78" stroke-width="2.4"/><circle cx="12.8" cy="3.3" r="1.6" fill="#5a2f78"/><circle cx="13" cy="14.6" r="1.6" fill="#5a2f78"/></g></svg>
<svg style="position:absolute;left:208px;top:120px;" width="18" height="18" viewBox="0 0 24 24"><rect x="3" y="3.5" width="13" height="13" rx="1" fill="#fbe34a" stroke="#c9a81a" stroke-width="1"/><rect x="12" y="13" width="11" height="11" rx="1" fill="#d9232b"/><circle cx="17.5" cy="18.5" r="3.3" fill="none" stroke="#fff" stroke-width="1"/><path d="M15.5 20.5 L19.5 16.5" stroke="#fff" stroke-width="1"/></svg>
<svg style="position:absolute;left:235px;top:120px;" width="17" height="17" viewBox="0 0 24 24"><rect x="1" y="1" width="22" height="22" rx="1.5" fill="#d6e2ec" stroke="#a8bccc" stroke-width="1"/><path d="M3 7 H9 M15 7 H21 M3 11 H9 M15 11 H21 M3 14 H9 M15 14 H21" stroke="#6a8aa8" stroke-width="1"/><path d="M12 3 L8 8 H10.5 V17 H13.5 V8 H16Z" fill="#4a7aa8"/><rect x="3" y="17" width="18" height="4" fill="#f2dd30" stroke="#b59b18" stroke-width="0.8"/></svg>
<svg style="position:absolute;left:262px;top:120px;" width="18" height="18" viewBox="0 0 24 24"><path d="M2 1 L23 23 H2 Z" fill="#fbe34a"/><path d="M6 8 A7 7 0 0 1 18 7 L20 4 V12 H12 L15 9.5 A4 4 0 0 0 9 10 Z" fill="#6aab6a"/><path d="M19 15 A7 7 0 0 1 7 17 L5 20 V12 H13 L10 14.5 A4 4 0 0 0 16 14 Z" fill="#6aab6a"/></svg>
<svg style="position:absolute;left:289px;top:120px;" width="19" height="19" viewBox="0 0 24 24"><rect x="1" y="1" width="14" height="12" fill="#fbe34a" stroke="#333" stroke-width="1" stroke-dasharray="2 1"/><path d="M12 1 L8 6 H16 Z M12 23 L8 18 H16 Z M1 12 L6 8 V16 Z M23 12 L18 8 V16 Z" fill="#5b8cc5"/><rect x="10" y="6" width="4" height="12" fill="#5b8cc5"/><rect x="6" y="10" width="12" height="4" fill="#5b8cc5"/></svg>
<svg style="position:absolute;left:317px;top:120px;" width="20" height="20" viewBox="0 0 24 24"><rect x="1" y="1" width="9" height="13" fill="#fbe34a" stroke="#333" stroke-width="1" stroke-dasharray="2 1"/><line x1="8.55" y1="14.45" x2="0.05000000000000071" y2="22.95" stroke="#333" stroke-width="4"/><line x1="5.8500000000000005" y1="17.15" x2="0.5500000000000007" y2="22.45" stroke="#f2c230" stroke-width="2.4"/><circle cx="14" cy="9" r="8.5" fill="#efeedd" stroke="#7a7a7a" stroke-width="1.3"/></svg>
<svg style="position:absolute;left:347px;top:120px;" width="16" height="16" viewBox="0 0 24 24"><rect x="7" y="1" width="13" height="16" fill="#f3e6a8" stroke="#c8b870" stroke-width="0.8"/><path d="M2 5 H11 L15 9 V23 H2 Z" fill="#fff" stroke="#999" stroke-width="0.9"/><path d="M4.5 12 H12 M4.5 15 H12 M4.5 18 H12" stroke="#aaa" stroke-width="1"/></svg>
<div style="position:absolute;left:372px;top:117px;width:1px;height:25px;background:#a0a0a0"></div>
<div style="position:absolute;left:373px;top:117px;width:1px;height:25px;background:#fdfdfd"></div>
<svg style="position:absolute;left:381px;top:120px;" width="18" height="18" viewBox="0 0 24 24"><rect x="1" y="1" width="21" height="21" rx="1" fill="#d6e2ec" stroke="#a8bccc" stroke-width="1"/><path d="M3 5 H21 M3 9 H7 M14 9 H21 M3 13 H7 M14 13 H21 M3 17 H7" stroke="#6a8aa8" stroke-width="1"/><rect x="8" y="2" width="5" height="19" fill="#f2dd30" stroke="#b59b18" stroke-width="0.8"/><rect x="13" y="13" width="10" height="10" rx="1.5" fill="#e23a3a"/><path d="M15.5 15.5 L20.5 20.5 M20.5 15.5 L15.5 20.5" stroke="#fff" stroke-width="1.6"/></svg>
<svg style="position:absolute;left:409px;top:120px;" width="18" height="18" viewBox="0 0 24 24"><rect x="1" y="1" width="21" height="21" rx="1" fill="#ececec" stroke="#cfcfcf" stroke-width="1"/><path d="M3 5 H21 M3 9 H7 M14 9 H21 M3 13 H7" stroke="#ccc" stroke-width="1"/><rect x="8" y="2" width="5" height="19" fill="#e6e6e6" stroke="#c8c8c8" stroke-width="0.8"/><circle cx="18" cy="18" r="5" fill="#d8d8d8" stroke="#bbb" stroke-width="0.8"/><path d="M18 14.5 V21.5 M14.5 18 H21.5" stroke="#fff" stroke-width="1.5"/></svg>
<svg style="position:absolute;left:437px;top:120px;" width="18" height="18" viewBox="0 0 24 24"><path d="M2 0 V22 M22 0 V22 M1 22.5 H23" stroke="#444" stroke-width="1.4"/><path d="M2 3 H22 M2 10 H22 M2 17 H22" stroke="#555" stroke-width="1"/><circle cx="11" cy="3" r="2.4" fill="#f66" stroke="#c22" stroke-width="0.9"/><circle cx="17" cy="3" r="2.4" fill="#f66" stroke="#c22" stroke-width="0.9"/><circle cx="6" cy="10" r="2.4" fill="#9d9" stroke="#5a5" stroke-width="0.9"/><circle cx="12" cy="10" r="2.4" fill="#9d9" stroke="#5a5" stroke-width="0.9"/><circle cx="6" cy="17" r="2.4" fill="#9bd" stroke="#47a" stroke-width="0.9"/><circle cx="17" cy="17" r="2.4" fill="#9bd" stroke="#47a" stroke-width="0.9"/></svg>
<div style="position:absolute;left:77px;top:144px;width:746px;height:708px;background:#fff;border:1px solid #828790"></div>
<div style="position:absolute;left:199px;top:145px;width:1px;height:20px;background:#e4ecf7"></div>
<div class="t" style="left:100px;top:152px;font-size:10.4px;color:#000;width:100px;text-align:center">name</div>
<div style="position:absolute;left:499px;top:145px;width:1px;height:20px;background:#e4ecf7"></div>
<div class="t" style="left:200px;top:152px;font-size:10.4px;color:#000;width:300px;text-align:center">cadnumber</div>
<div style="position:absolute;left:599px;top:145px;width:1px;height:20px;background:#e4ecf7"></div>
<div class="t" style="left:500px;top:152px;font-size:10.4px;color:#000;width:100px;text-align:center">utilizd</div>
<div style="position:absolute;left:699px;top:145px;width:1px;height:20px;background:#e4ecf7"></div>
<div class="t" style="left:600px;top:152px;font-size:10.4px;color:#000;width:100px;text-align:center">utilizt</div>
<div style="position:absolute;left:799px;top:145px;width:1px;height:20px;background:#e4ecf7"></div>
<div class="t" style="left:700px;top:152px;font-size:10.4px;color:#000;width:100px;text-align:center">type</div>
<div style="position:absolute;left:806px;top:145px;width:1px;height:20px;background:#e4ecf7"></div>
<div style="position:absolute;left:99px;top:145px;width:1px;height:20px;background:#e4ecf7"></div>
<div style="position:absolute;left:78px;top:165px;width:728px;height:1px;background:#e4ecf7"></div>
<svg style="position:absolute;left:147px;top:146px;" width="8" height="4" viewBox="0 0 8 4"><path d="M0 0 L8 0 L4 4 Z" fill="#7fb2e0"/></svg>
<div style="position:absolute;left:78px;top:165px;width:728px;height:669px;overflow:hidden">
<div style="position:absolute;left:21px;top:1px;width:707px;height:19px;background:#fff"></div>
<div style="position:absolute;left:21px;top:20px;width:707px;height:1px;background:#d9d9d9"></div>
<div style="position:absolute;left:0px;top:20px;width:21px;height:1px;background:#e4ecf7"></div>
<div style="position:absolute;left:121px;top:0px;width:1px;height:21px;background:#d9d9d9"></div>
<div style="position:absolute;left:421px;top:0px;width:1px;height:21px;background:#d9d9d9"></div>
<div style="position:absolute;left:521px;top:0px;width:1px;height:21px;background:#d9d9d9"></div>
<div style="position:absolute;left:621px;top:0px;width:1px;height:21px;background:#d9d9d9"></div>
<div style="position:absolute;left:721px;top:0px;width:1px;height:21px;background:#d9d9d9"></div>
<div class="t" style="left:4px;top:7px;font-size:10px;color:#000">0</div>
<div class="t" style="left:24px;top:4px;font-size:10px;color:#000">ParcelsFromKPT</div>
<div class="t" style="left:125px;top:3px;font-size:11.1px;color:#000">Е3:23:00:0000000:512; 23:38:0810000:95</div>
<div class="t" style="left:425px;top:3px;font-size:10.8px;color:#000">Для размещени...</div>
<div class="t" style="left:525px;top:3px;font-size:10.8px;color:#000">Для размещени...</div>
<div class="t" style="left:625px;top:3px;font-size:10.8px;color:#000">Обособленный ...</div>
<div class="t" style="left:725px;top:3px;font-size:10.8px;color:#000">Р</div>
<div style="position:absolute;left:21px;top:21px;width:707px;height:19px;background:#f5f5f5"></div>
<div style="position:absolute;left:21px;top:40px;width:707px;height:1px;background:#d9d9d9"></div>
<div style="position:absolute;left:0px;top:40px;width:21px;height:1px;background:#e4ecf7"></div>
<div style="position:absolute;left:121px;top:20px;width:1px;height:21px;background:#d9d9d9"></div>
<div style="position:absolute;left:421px;top:20px;width:1px;height:21px;background:#d9d9d9"></div>
<div style="position:absolute;left:521px;top:20px;width:1px;height:21px;background:#d9d9d9"></div>
<div style="position:absolute;left:621px;top:20px;width:1px;height:21px;background:#d9d9d9"></div>
<div style="position:absolute;left:721px;top:20px;width:1px;height:21px;background:#d9d9d9"></div>
<div class="t" style="left:4px;top:27px;font-size:10px;color:#000">1</div>
<div class="t" style="left:24px;top:24px;font-size:10px;color:#000">ParcelsFromKPT</div>
<div class="t" style="left:125px;top:23px;font-size:11.1px;color:#000">Е3:23:00:0000000:512; 23:38:0810000:94</div>
<div class="t" style="left:425px;top:23px;font-size:10.8px;color:#000">Для размещени...</div>
<div class="t" style="left:525px;top:23px;font-size:10.8px;color:#000">Для размещени...</div>
<div class="t" style="left:625px;top:23px;font-size:10.8px;color:#000">Обособленный ...</div>
<div class="t" style="left:725px;top:23px;font-size:10.8px;color:#000">Р</div>
<div style="position:absolute;left:21px;top:41px;width:707px;height:19px;background:#fff"></div>
<div style="position:absolute;left:21px;top:60px;width:707px;height:1px;background:#d9d9d9"></div>
<div style="position:absolute;left:0px;top:60px;width:21px;height:1px;background:#e4ecf7"></div>
<div style="position:absolute;left:121px;top:40px;width:1px;height:21px;background:#d9d9d9"></div>
<div style="position:absolute;left:421px;top:40px;width:1px;height:21px;background:#d9d9d9"></div>
<div style="position:absolute;left:521px;top:40px;width:1px;height:21px;background:#d9d9d9"></div>
<div style="position:absolute;left:621px;top:40px;width:1px;height:21px;background:#d9d9d9"></div>
<div style="position:absolute;left:721px;top:40px;width:1px;height:21px;background:#d9d9d9"></div>
<div class="t" style="left:4px;top:47px;font-size:10px;color:#000">2</div>
<div class="t" style="left:24px;top:44px;font-size:10px;color:#000">ParcelsFromKPT</div>
<div class="t" style="left:125px;top:43px;font-size:11.1px;color:#000">Е3:23:00:0000000:512; 23:38:0810000:93</div>
<div class="t" style="left:425px;top:43px;font-size:10.8px;color:#000">Для размещени...</div>
<div class="t" style="left:525px;top:43px;font-size:10.8px;color:#000">Для размещени...</div>
<div class="t" style="left:625px;top:43px;font-size:10.8px;color:#000">Обособленный ...</div>
<div class="t" style="left:725px;top:43px;font-size:10.8px;color:#000">Р</div>
<div style="position:absolute;left:21px;top:61px;width:707px;height:19px;background:#f5f5f5"></div>
<div style="position:absolute;left:21px;top:80px;width:707px;height:1px;background:#d9d9d9"></div>
<div style="position:absolute;left:0px;top:80px;width:21px;height:1px;background:#e4ecf7"></div>
<div style="position:absolute;left:121px;top:60px;width:1px;height:21px;background:#d9d9d9"></div>
<div style="position:absolute;left:421px;top:60px;width:1px;height:21px;background:#d9d9d9"></div>
<div style="position:absolute;left:521px;top:60px;width:1px;height:21px;background:#d9d9d9"></div>
<div style="position:absolute;left:621px;top:60px;width:1px;height:21px;background:#d9d9d9"></div>
<div style="position:absolute;left:721px;top:60px;width:1px;height:21px;background:#d9d9d9"></div>
<div class="t" style="left:4px;top:67px;font-size:10px;color:#000">3</div>
<div class="t" style="left:24px;top:64px;font-size:10px;color:#000">ParcelsFromKPT</div>
<div class="t" style="left:125px;top:63px;font-size:11.1px;color:#000">Е3:23:00:0000000:512; 23:38:0810000:92</div>
<div class="t" style="left:425px;top:63px;font-size:10.8px;color:#000">Для размещени...</div>
<div class="t" style="left:525px;top:63px;font-size:10.8px;color:#000">Для размещени...</div>
<div class="t" style="left:625px;top:63px;font-size:10.8px;color:#000">Обособленный ...</div>
<div class="t" style="left:725px;top:63px;font-size:10.8px;color:#000">Р</div>
<div style="position:absolute;left:21px;top:81px;width:707px;height:19px;background:#fff"></div>
<div style="position:absolute;left:21px;top:100px;width:707px;height:1px;background:#d9d9d9"></div>
<div style="position:absolute;left:0px;top:100px;width:21px;height:1px;background:#e4ecf7"></div>
<div style="position:absolute;left:121px;top:80px;width:1px;height:21px;background:#d9d9d9"></div>
<div style="position:absolute;left:421px;top:80px;width:1px;height:21px;background:#d9d9d9"></div>
<div style="position:absolute;left:521px;top:80px;width:1px;height:21px;background:#d9d9d9"></div>
<div style="position:absolute;left:621px;top:80px;width:1px;height:21px;background:#d9d9d9"></div>
<div style="position:absolute;left:721px;top:80px;width:1px;height:21px;background:#d9d9d9"></div>
<div class="t" style="left:4px;top:87px;font-size:10px;color:#000">4</div>
<div class="t" style="left:24px;top:84px;font-size:10px;color:#000">ParcelsFromKPT</div>
<div class="t" style="left:125px;top:83px;font-size:11.1px;color:#000">Е3:23:00:0000000:512; 23:38:0810000:91</div>
<div class="t" style="left:425px;top:83px;font-size:10.8px;color:#000">Для размещени...</div>
<div class="t" style="left:525px;top:83px;font-size:10.8px;color:#000">Для размещени...</div>
<div class="t" style="left:625px;top:83px;font-size:10.8px;color:#000">Обособленный ...</div>
<div class="t" style="left:725px;top:83px;font-size:10.8px;color:#000">Р</div>
<div style="position:absolute;left:21px;top:101px;width:707px;height:19px;background:#f5f5f5"></div>
<div style="position:absolute;left:21px;top:120px;width:707px;height:1px;background:#d9d9d9"></div>
<div style="position:absolute;left:0px;top:120px;width:21px;height:1px;background:#e4ecf7"></div>
<div style="position:absolute;left:121px;top:100px;width:1px;height:21px;background:#d9d9d9"></div>
<div style="position:absolute;left:421px;top:100px;width:1px;height:21px;background:#d9d9d9"></div>
<div style="position:absolute;left:521px;top:100px;width:1px;height:21px;background:#d9d9d9"></div>
<div style="position:absolute;left:621px;top:100px;width:1px;height:21px;background:#d9d9d9"></div>
<div style="position:absolute;left:721px;top:100px;width:1px;height:21px;background:#d9d9d9"></div>
<div class="t" style="left:4px;top:107px;font-size:10px;color:#000">5</div>
<div class="t" style="left:24px;top:104px;font-size:10px;color:#000">ParcelsFromKPT</div>
<div class="t" style="left:125px;top:103px;font-size:11.1px;color:#000">Е3:23:00:0000000:512; 23:38:0810000:90</div>
<div class="t" style="left:425px;top:103px;font-size:10.8px;color:#000">Для размещени...</div>
<div class="t" style="left:525px;top:103px;font-size:10.8px;color:#000">Для размещени...</div>
<div class="t" style="left:625px;top:103px;font-size:10.8px;color:#000">Обособленный ...</div>
<div class="t" style="left:725px;top:103px;font-size:10.8px;color:#000">Р</div>
<div style="position:absolute;left:21px;top:121px;width:707px;height:19px;background:#fff"></div>
<div style="position:absolute;left:21px;top:140px;width:707px;height:1px;background:#d9d9d9"></div>
<div style="position:absolute;left:0px;top:140px;width:21px;height:1px;background:#e4ecf7"></div>
<div style="position:absolute;left:121px;top:120px;width:1px;height:21px;background:#d9d9d9"></div>
<div style="position:absolute;left:421px;top:120px;width:1px;height:21px;background:#d9d9d9"></div>
<div style="position:absolute;left:521px;top:120px;width:1px;height:21px;background:#d9d9d9"></div>
<div style="position:absolute;left:621px;top:120px;width:1px;height:21px;background:#d9d9d9"></div>
<div style="position:absolute;left:721px;top:120px;width:1px;height:21px;background:#d9d9d9"></div>
<div class="t" style="left:4px;top:127px;font-size:10px;color:#000">6</div>
<div class="t" style="left:24px;top:124px;font-size:10px;color:#000">ParcelsFromKPT</div>
<div class="t" style="left:125px;top:123px;font-size:11.1px;color:#000">Е3:23:00:0000000:512; 23:38:0810000:89</div>
<div class="t" style="left:425px;top:123px;font-size:10.8px;color:#000">Для размещени...</div>
<div class="t" style="left:525px;top:123px;font-size:10.8px;color:#000">Для размещени...</div>
<div class="t" style="left:625px;top:123px;font-size:10.8px;color:#000">Обособленный ...</div>
<div class="t" style="left:725px;top:123px;font-size:10.8px;color:#000">Р</div>
<div style="position:absolute;left:21px;top:141px;width:707px;height:19px;background:#f5f5f5"></div>
<div style="position:absolute;left:21px;top:160px;width:707px;height:1px;background:#d9d9d9"></div>
<div style="position:absolute;left:0px;top:160px;width:21px;height:1px;background:#e4ecf7"></div>
<div style="position:absolute;left:121px;top:140px;width:1px;height:21px;background:#d9d9d9"></div>
<div style="position:absolute;left:421px;top:140px;width:1px;height:21px;background:#d9d9d9"></div>
<div style="position:absolute;left:521px;top:140px;width:1px;height:21px;background:#d9d9d9"></div>
<div style="position:absolute;left:621px;top:140px;width:1px;height:21px;background:#d9d9d9"></div>
<div style="position:absolute;left:721px;top:140px;width:1px;height:21px;background:#d9d9d9"></div>
<div class="t" style="left:4px;top:147px;font-size:10px;color:#000">7</div>
<div class="t" style="left:24px;top:144px;font-size:10px;color:#000">ParcelsFromKPT</div>
<div class="t" style="left:125px;top:143px;font-size:11.1px;color:#000">23:38:0810000:83</div>
<div class="t" style="left:425px;top:143px;font-size:10.8px;color:#000">Для крестьянск...</div>
<div class="t" style="left:525px;top:143px;font-size:10.8px;color:#000">Для сельскохоз...</div>
<div class="t" style="left:625px;top:143px;font-size:10.8px;color:#000">Землепользован...</div>
<div class="t" style="left:725px;top:143px;font-size:10.8px;color:#000">У</div>
<div style="position:absolute;left:21px;top:161px;width:707px;height:19px;background:#fff"></div>
<div style="position:absolute;left:21px;top:180px;width:707px;height:1px;background:#d9d9d9"></div>
<div style="position:absolute;left:0px;top:180px;width:21px;height:1px;background:#e4ecf7"></div>
<div style="position:absolute;left:121px;top:160px;width:1px;height:21px;background:#d9d9d9"></div>
<div style="position:absolute;left:421px;top:160px;width:1px;height:21px;background:#d9d9d9"></div>
<div style="position:absolute;left:521px;top:160px;width:1px;height:21px;background:#d9d9d9"></div>
<div style="position:absolute;left:621px;top:160px;width:1px;height:21px;background:#d9d9d9"></div>
<div style="position:absolute;left:721px;top:160px;width:1px;height:21px;background:#d9d9d9"></div>
<div class="t" style="left:4px;top:167px;font-size:10px;color:#000">8</div>
<div class="t" style="left:24px;top:164px;font-size:10px;color:#000">ParcelsFromKPT</div>
<div class="t" style="left:125px;top:163px;font-size:11.1px;color:#000">23:38:0810000:82</div>
<div class="t" style="left:425px;top:163px;font-size:10.8px;color:#000">Для крестьянск...</div>
<div class="t" style="left:525px;top:163px;font-size:10.8px;color:#000">Для сельскохоз...</div>
<div class="t" style="left:625px;top:163px;font-size:10.8px;color:#000">Землепользован...</div>
<div class="t" style="left:725px;top:163px;font-size:10.8px;color:#000">У</div>
<div style="position:absolute;left:21px;top:181px;width:707px;height:19px;background:#f5f5f5"></div>
<div style="position:absolute;left:21px;top:200px;width:707px;height:1px;background:#d9d9d9"></div>
<div style="position:absolute;left:0px;top:200px;width:21px;height:1px;background:#e4ecf7"></div>
<div style="position:absolute;left:121px;top:180px;width:1px;height:21px;background:#d9d9d9"></div>
<div style="position:absolute;left:421px;top:180px;width:1px;height:21px;background:#d9d9d9"></div>
<div style="position:absolute;left:521px;top:180px;width:1px;height:21px;background:#d9d9d9"></div>
<div style="position:absolute;left:621px;top:180px;width:1px;height:21px;background:#d9d9d9"></div>
<div style="position:absolute;left:721px;top:180px;width:1px;height:21px;background:#d9d9d9"></div>
<div class="t" style="left:4px;top:187px;font-size:10px;color:#000">9</div>
<div class="t" style="left:24px;top:184px;font-size:10px;color:#000">ParcelsFromKPT</div>
<div class="t" style="left:125px;top:183px;font-size:11.1px;color:#000">23:38:0810000:81</div>
<div class="t" style="left:425px;top:183px;font-size:10.8px;color:#000">Для крестьянск...</div>
<div class="t" style="left:525px;top:183px;font-size:10.8px;color:#000">Для сельскохоз...</div>
<div class="t" style="left:625px;top:183px;font-size:10.8px;color:#000">Землепользован...</div>
<div class="t" style="left:725px;top:183px;font-size:10.8px;color:#000">Р</div>
<div style="position:absolute;left:21px;top:201px;width:707px;height:19px;background:#fff"></div>
<div style="position:absolute;left:21px;top:220px;width:707px;height:1px;background:#d9d9d9"></div>
<div style="position:absolute;left:0px;top:220px;width:21px;height:1px;background:#e4ecf7"></div>
<div style="position:absolute;left:121px;top:200px;width:1px;height:21px;background:#d9d9d9"></div>
<div style="position:absolute;left:421px;top:200px;width:1px;height:21px;background:#d9d9d9"></div>
<div style="position:absolute;left:521px;top:200px;width:1px;height:21px;background:#d9d9d9"></div>
<div style="position:absolute;left:621px;top:200px;width:1px;height:21px;background:#d9d9d9"></div>
<div style="position:absolute;left:721px;top:200px;width:1px;height:21px;background:#d9d9d9"></div>
<div class="t" style="left:4px;top:207px;font-size:10px;color:#000">10</div>
<div class="t" style="left:24px;top:204px;font-size:10px;color:#000">ParcelsFromKPT</div>
<div class="t" style="left:125px;top:203px;font-size:11.1px;color:#000">23:38:0810000:80</div>
<div class="t" style="left:425px;top:203px;font-size:10.8px;color:#000">Для крестьянск...</div>
<div class="t" style="left:525px;top:203px;font-size:10.8px;color:#000">Для сельскохоз...</div>
<div class="t" style="left:625px;top:203px;font-size:10.8px;color:#000">Землепользован...</div>
<div class="t" style="left:725px;top:203px;font-size:10.8px;color:#000">Р</div>
<div style="position:absolute;left:21px;top:221px;width:707px;height:19px;background:#f5f5f5"></div>
<div style="position:absolute;left:21px;top:240px;width:707px;height:1px;background:#d9d9d9"></div>
<div style="position:absolute;left:0px;top:240px;width:21px;height:1px;background:#e4ecf7"></div>
<div style="position:absolute;left:121px;top:220px;width:1px;height:21px;background:#d9d9d9"></div>
<div style="position:absolute;left:421px;top:220px;width:1px;height:21px;background:#d9d9d9"></div>
<div style="position:absolute;left:521px;top:220px;width:1px;height:21px;background:#d9d9d9"></div>
<div style="position:absolute;left:621px;top:220px;width:1px;height:21px;background:#d9d9d9"></div>
<div style="position:absolute;left:721px;top:220px;width:1px;height:21px;background:#d9d9d9"></div>
<div class="t" style="left:4px;top:227px;font-size:10px;color:#000">11</div>
<div class="t" style="left:24px;top:224px;font-size:10px;color:#000">ParcelsFromKPT</div>
<div class="t" style="left:125px;top:223px;font-size:11.1px;color:#000">23:38:0810000:78</div>
<div class="t" style="left:425px;top:223px;font-size:10.8px;color:#000">Для крестьянск...</div>
<div class="t" style="left:525px;top:223px;font-size:10.8px;color:#000">Для сельскохоз...</div>
<div class="t" style="left:625px;top:223px;font-size:10.8px;color:#000">Землепользован...</div>
<div class="t" style="left:725px;top:223px;font-size:10.8px;color:#000">Р</div>
<div style="position:absolute;left:21px;top:241px;width:707px;height:19px;background:#fff"></div>
<div style="position:absolute;left:21px;top:260px;width:707px;height:1px;background:#d9d9d9"></div>
<div style="position:absolute;left:0px;top:260px;width:21px;height:1px;background:#e4ecf7"></div>
<div style="position:absolute;left:121px;top:240px;width:1px;height:21px;background:#d9d9d9"></div>
<div style="position:absolute;left:421px;top:240px;width:1px;height:21px;background:#d9d9d9"></div>
<div style="position:absolute;left:521px;top:240px;width:1px;height:21px;background:#d9d9d9"></div>
<div style="position:absolute;left:621px;top:240px;width:1px;height:21px;background:#d9d9d9"></div>
<div style="position:absolute;left:721px;top:240px;width:1px;height:21px;background:#d9d9d9"></div>
<div class="t" style="left:4px;top:247px;font-size:10px;color:#000">12</div>
<div class="t" style="left:24px;top:244px;font-size:10px;color:#000">ParcelsFromKPT</div>
<div class="t" style="left:125px;top:243px;font-size:11.1px;color:#000">23:38:0810000:75</div>
<div class="t" style="left:425px;top:243px;font-size:10.8px;color:#000">Для крестьянск...</div>
<div class="t" style="left:525px;top:243px;font-size:10.8px;color:#000">Для сельскохоз...</div>
<div class="t" style="left:625px;top:243px;font-size:10.8px;color:#000">Землепользован...</div>
<div class="t" style="left:725px;top:243px;font-size:10.8px;color:#000">Р</div>
<div style="position:absolute;left:21px;top:261px;width:707px;height:19px;background:#f5f5f5"></div>
<div style="position:absolute;left:21px;top:280px;width:707px;height:1px;background:#d9d9d9"></div>
<div style="position:absolute;left:0px;top:280px;width:21px;height:1px;background:#e4ecf7"></div>
<div style="position:absolute;left:121px;top:260px;width:1px;height:21px;background:#d9d9d9"></div>
<div style="position:absolute;left:421px;top:260px;width:1px;height:21px;background:#d9d9d9"></div>
<div style="position:absolute;left:521px;top:260px;width:1px;height:21px;background:#d9d9d9"></div>
<div style="position:absolute;left:621px;top:260px;width:1px;height:21px;background:#d9d9d9"></div>
<div style="position:absolute;left:721px;top:260px;width:1px;height:21px;background:#d9d9d9"></div>
<div class="t" style="left:4px;top:267px;font-size:10px;color:#000">13</div>
<div class="t" style="left:24px;top:264px;font-size:10px;color:#000">ParcelsFromKPT</div>
<div class="t" style="left:125px;top:263px;font-size:11.1px;color:#000">23:38:0810000:73</div>
<div class="t" style="left:425px;top:263px;font-size:10.8px;color:#000">Для сельскохоз...</div>
<div class="t" style="left:525px;top:263px;font-size:10.8px;color:#000">Для сельскохоз...</div>
<div class="t" style="left:625px;top:263px;font-size:10.8px;color:#000">Землепользован...</div>
<div class="t" style="left:725px;top:263px;font-size:10.8px;color:#000">Р</div>
<div style="position:absolute;left:21px;top:281px;width:707px;height:19px;background:#fff"></div>
<div style="position:absolute;left:21px;top:300px;width:707px;height:1px;background:#d9d9d9"></div>
<div style="position:absolute;left:0px;top:300px;width:21px;height:1px;background:#e4ecf7"></div>
<div style="position:absolute;left:121px;top:280px;width:1px;height:21px;background:#d9d9d9"></div>
<div style="position:absolute;left:421px;top:280px;width:1px;height:21px;background:#d9d9d9"></div>
<div style="position:absolute;left:521px;top:280px;width:1px;height:21px;background:#d9d9d9"></div>
<div style="position:absolute;left:621px;top:280px;width:1px;height:21px;background:#d9d9d9"></div>
<div style="position:absolute;left:721px;top:280px;width:1px;height:21px;background:#d9d9d9"></div>
<div class="t" style="left:4px;top:287px;font-size:10px;color:#000">14</div>
<div class="t" style="left:24px;top:284px;font-size:10px;color:#000">ParcelsFromKPT</div>
<div class="t" style="left:125px;top:283px;font-size:11.1px;color:#000">23:38:0810000:72</div>
<div class="t" style="left:425px;top:283px;font-size:10.8px;color:#000">Для сельскохоз...</div>
<div class="t" style="left:525px;top:283px;font-size:10.8px;color:#000">Для сельскохоз...</div>
<div class="t" style="left:625px;top:283px;font-size:10.8px;color:#000">Землепользован...</div>
<div class="t" style="left:725px;top:283px;font-size:10.8px;color:#000">Р</div>
<div style="position:absolute;left:21px;top:301px;width:707px;height:19px;background:#f5f5f5"></div>
<div style="position:absolute;left:21px;top:320px;width:707px;height:1px;background:#d9d9d9"></div>
<div style="position:absolute;left:0px;top:320px;width:21px;height:1px;background:#e4ecf7"></div>
<div style="position:absolute;left:121px;top:300px;width:1px;height:21px;background:#d9d9d9"></div>
<div style="position:absolute;left:421px;top:300px;width:1px;height:21px;background:#d9d9d9"></div>
<div style="position:absolute;left:521px;top:300px;width:1px;height:21px;background:#d9d9d9"></div>
<div style="position:absolute;left:621px;top:300px;width:1px;height:21px;background:#d9d9d9"></div>
<div style="position:absolute;left:721px;top:300px;width:1px;height:21px;background:#d9d9d9"></div>
<div class="t" style="left:4px;top:307px;font-size:10px;color:#000">15</div>
<div class="t" style="left:24px;top:304px;font-size:10px;color:#000">ParcelsFromKPT</div>
<div class="t" style="left:125px;top:303px;font-size:11.1px;color:#000">Е3:23:38:0810000:60; 23:38:0810000:62</div>
<div class="t" style="left:425px;top:303px;font-size:10.8px;color:#000">Для эксплуатац...</div>
<div class="t" style="left:525px;top:303px;font-size:10.8px;color:#000">Для размещени...</div>
<div class="t" style="left:625px;top:303px;font-size:10.8px;color:#000">Обособленный ...</div>
<div class="t" style="left:725px;top:303px;font-size:10.8px;color:#000">Р</div>
<div style="position:absolute;left:21px;top:321px;width:707px;height:19px;background:#fff"></div>
<div style="position:absolute;left:21px;top:340px;width:707px;height:1px;background:#d9d9d9"></div>
<div style="position:absolute;left:0px;top:340px;width:21px;height:1px;background:#e4ecf7"></div>
<div style="position:absolute;left:121px;top:320px;width:1px;height:21px;background:#d9d9d9"></div>
<div style="position:absolute;left:421px;top:320px;width:1px;height:21px;background:#d9d9d9"></div>
<div style="position:absolute;left:521px;top:320px;width:1px;height:21px;background:#d9d9d9"></div>
<div style="position:absolute;left:621px;top:320px;width:1px;height:21px;background:#d9d9d9"></div>
<div style="position:absolute;left:721px;top:320px;width:1px;height:21px;background:#d9d9d9"></div>
<div class="t" style="left:4px;top:327px;font-size:10px;color:#000">16</div>
<div class="t" style="left:24px;top:324px;font-size:10px;color:#000">ParcelsFromKPT</div>
<div class="t" style="left:125px;top:323px;font-size:11.1px;color:#000">Е3:23:38:0810000:60; 23:38:0810000:61</div>
<div class="t" style="left:425px;top:323px;font-size:10.8px;color:#000">Для эксплуатац...</div>
<div class="t" style="left:525px;top:323px;font-size:10.8px;color:#000">Для размещени...</div>
<div class="t" style="left:625px;top:323px;font-size:10.8px;color:#000">Обособленный ...</div>
<div class="t" style="left:725px;top:323px;font-size:10.8px;color:#000">Р</div>
<div style="position:absolute;left:21px;top:341px;width:707px;height:19px;background:#f5f5f5"></div>
<div style="position:absolute;left:21px;top:360px;width:707px;height:1px;background:#d9d9d9"></div>
<div style="position:absolute;left:0px;top:360px;width:21px;height:1px;background:#e4ecf7"></div>
<div style="position:absolute;left:121px;top:340px;width:1px;height:21px;background:#d9d9d9"></div>
<div style="position:absolute;left:421px;top:340px;width:1px;height:21px;background:#d9d9d9"></div>
<div style="position:absolute;left:521px;top:340px;width:1px;height:21px;background:#d9d9d9"></div>
<div style="position:absolute;left:621px;top:340px;width:1px;height:21px;background:#d9d9d9"></div>
<div style="position:absolute;left:721px;top:340px;width:1px;height:21px;background:#d9d9d9"></div>
<div class="t" style="left:4px;top:347px;font-size:10px;color:#000">17</div>
<div class="t" style="left:24px;top:344px;font-size:10px;color:#000">ParcelsFromKPT</div>
<div class="t" style="left:125px;top:343px;font-size:11.1px;color:#000">23:38:0810000:59</div>
<div class="t" style="left:425px;top:343px;font-size:10.8px;color:#000">Для сельскохоз...</div>
<div class="t" style="left:525px;top:343px;font-size:10.8px;color:#000">Для сельскохоз...</div>
<div class="t" style="left:625px;top:343px;font-size:10.8px;color:#000">Землепользован...</div>
<div class="t" style="left:725px;top:343px;font-size:10.8px;color:#000">Р</div>
<div style="position:absolute;left:21px;top:361px;width:707px;height:19px;background:#fff"></div>
<div style="position:absolute;left:21px;top:380px;width:707px;height:1px;background:#d9d9d9"></div>
<div style="position:absolute;left:0px;top:380px;width:21px;height:1px;background:#e4ecf7"></div>
<div style="position:absolute;left:121px;top:360px;width:1px;height:21px;background:#d9d9d9"></div>
<div style="position:absolute;left:421px;top:360px;width:1px;height:21px;background:#d9d9d9"></div>
<div style="position:absolute;left:521px;top:360px;width:1px;height:21px;background:#d9d9d9"></div>
<div style="position:absolute;left:621px;top:360px;width:1px;height:21px;background:#d9d9d9"></div>
<div style="position:absolute;left:721px;top:360px;width:1px;height:21px;background:#d9d9d9"></div>
<div class="t" style="left:4px;top:367px;font-size:10px;color:#000">18</div>
<div class="t" style="left:24px;top:364px;font-size:10px;color:#000">ParcelsFromKPT</div>
<div class="t" style="left:125px;top:363px;font-size:11.1px;color:#000">23:38:0810000:58</div>
<div class="t" style="left:425px;top:363px;font-size:10.8px;color:#000">Для крестьянск...</div>
<div class="t" style="left:525px;top:363px;font-size:10.8px;color:#000">Для сельскохоз...</div>
<div class="t" style="left:625px;top:363px;font-size:10.8px;color:#000">Землепользован...</div>
<div class="t" style="left:725px;top:363px;font-size:10.8px;color:#000">Р</div>
<div style="position:absolute;left:21px;top:381px;width:707px;height:19px;background:#f5f5f5"></div>
<div style="position:absolute;left:21px;top:400px;width:707px;height:1px;background:#d9d9d9"></div>
<div style="position:absolute;left:0px;top:400px;width:21px;height:1px;background:#e4ecf7"></div>
<div style="position:absolute;left:121px;top:380px;width:1px;height:21px;background:#d9d9d9"></div>
<div style="position:absolute;left:421px;top:380px;width:1px;height:21px;background:#d9d9d9"></div>
<div style="position:absolute;left:521px;top:380px;width:1px;height:21px;background:#d9d9d9"></div>
<div style="position:absolute;left:621px;top:380px;width:1px;height:21px;background:#d9d9d9"></div>
<div style="position:absolute;left:721px;top:380px;width:1px;height:21px;background:#d9d9d9"></div>
<div class="t" style="left:4px;top:387px;font-size:10px;color:#000">19</div>
<div class="t" style="left:24px;top:384px;font-size:10px;color:#000">ParcelsFromKPT</div>
<div class="t" style="left:125px;top:383px;font-size:11.1px;color:#000">23:38:0810000:54</div>
<div class="t" style="left:425px;top:383px;font-size:10.8px;color:#000">Для крестьянск...</div>
<div class="t" style="left:525px;top:383px;font-size:10.8px;color:#000">Для ведения кр...</div>
<div class="t" style="left:625px;top:383px;font-size:10.8px;color:#000">Землепользован...</div>
<div class="t" style="left:725px;top:383px;font-size:10.8px;color:#000">Р</div>
<div style="position:absolute;left:21px;top:401px;width:707px;height:19px;background:#fff"></div>
<div style="position:absolute;left:21px;top:420px;width:707px;height:1px;background:#d9d9d9"></div>
<div style="position:absolute;left:0px;top:420px;width:21px;height:1px;background:#e4ecf7"></div>
<div style="position:absolute;left:121px;top:400px;width:1px;height:21px;background:#d9d9d9"></div>
<div style="position:absolute;left:421px;top:400px;width:1px;height:21px;background:#d9d9d9"></div>
<div style="position:absolute;left:521px;top:400px;width:1px;height:21px;background:#d9d9d9"></div>
<div style="position:absolute;left:621px;top:400px;width:1px;height:21px;background:#d9d9d9"></div>
<div style="position:absolute;left:721px;top:400px;width:1px;height:21px;background:#d9d9d9"></div>
<div class="t" style="left:4px;top:407px;font-size:10px;color:#000">20</div>
<div class="t" style="left:24px;top:404px;font-size:10px;color:#000">ParcelsFromKPT</div>
<div class="t" style="left:125px;top:403px;font-size:11.1px;color:#000">23:38:0810000:52</div>
<div class="t" style="left:425px;top:403px;font-size:10.8px;color:#000">Для крестьянск...</div>
<div class="t" style="left:525px;top:403px;font-size:10.8px;color:#000">Для ведения кр...</div>
<div class="t" style="left:625px;top:403px;font-size:10.8px;color:#000">Землепользован...</div>
<div class="t" style="left:725px;top:403px;font-size:10.8px;color:#000">Р</div>
<div style="position:absolute;left:21px;top:421px;width:707px;height:19px;background:#f5f5f5"></div>
<div style="position:absolute;left:21px;top:440px;width:707px;height:1px;background:#d9d9d9"></div>
<div style="position:absolute;left:0px;top:440px;width:21px;height:1px;background:#e4ecf7"></div>
<div style="position:absolute;left:121px;top:420px;width:1px;height:21px;background:#d9d9d9"></div>
<div style="position:absolute;left:421px;top:420px;width:1px;height:21px;background:#d9d9d9"></div>
<div style="position:absolute;left:521px;top:420px;width:1px;height:21px;background:#d9d9d9"></div>
<div style="position:absolute;left:621px;top:420px;width:1px;height:21px;background:#d9d9d9"></div>
<div style="position:absolute;left:721px;top:420px;width:1px;height:21px;background:#d9d9d9"></div>
<div class="t" style="left:4px;top:427px;font-size:10px;color:#000">21</div>
<div class="t" style="left:24px;top:424px;font-size:10px;color:#000">ParcelsFromKPT</div>
<div class="t" style="left:125px;top:423px;font-size:11.1px;color:#000">23:38:0810000:41</div>
<div class="t" style="left:425px;top:423px;font-size:10.8px;color:#000">Для сельскохоз...</div>
<div class="t" style="left:525px;top:423px;font-size:10.8px;color:#000">Для сельскохоз...</div>
<div class="t" style="left:625px;top:423px;font-size:10.8px;color:#000">Землепользован...</div>
<div class="t" style="left:725px;top:423px;font-size:10.8px;color:#000">Р</div>
<div style="position:absolute;left:21px;top:441px;width:707px;height:19px;background:#fff"></div>
<div style="position:absolute;left:21px;top:460px;width:707px;height:1px;background:#d9d9d9"></div>
<div style="position:absolute;left:0px;top:460px;width:21px;height:1px;background:#e4ecf7"></div>
<div style="position:absolute;left:121px;top:440px;width:1px;height:21px;background:#d9d9d9"></div>
<div style="position:absolute;left:421px;top:440px;width:1px;height:21px;background:#d9d9d9"></div>
<div style="position:absolute;left:521px;top:440px;width:1px;height:21px;background:#d9d9d9"></div>
<div style="position:absolute;left:621px;top:440px;width:1px;height:21px;background:#d9d9d9"></div>
<div style="position:absolute;left:721px;top:440px;width:1px;height:21px;background:#d9d9d9"></div>
<div class="t" style="left:4px;top:447px;font-size:10px;color:#000">22</div>
<div class="t" style="left:24px;top:444px;font-size:10px;color:#000">ParcelsFromKPT</div>
<div class="t" style="left:125px;top:443px;font-size:11.1px;color:#000">23:38:0810000:40</div>
<div class="t" style="left:425px;top:443px;font-size:10.8px;color:#000">Для сельскохоз...</div>
<div class="t" style="left:525px;top:443px;font-size:10.8px;color:#000">Для сельскохоз...</div>
<div class="t" style="left:625px;top:443px;font-size:10.8px;color:#000">Землепользован...</div>
<div class="t" style="left:725px;top:443px;font-size:10.8px;color:#000">Р</div>
<div style="position:absolute;left:21px;top:461px;width:707px;height:19px;background:#f5f5f5"></div>
<div style="position:absolute;left:21px;top:480px;width:707px;height:1px;background:#d9d9d9"></div>
<div style="position:absolute;left:0px;top:480px;width:21px;height:1px;background:#e4ecf7"></div>
<div style="position:absolute;left:121px;top:460px;width:1px;height:21px;background:#d9d9d9"></div>
<div style="position:absolute;left:421px;top:460px;width:1px;height:21px;background:#d9d9d9"></div>
<div style="position:absolute;left:521px;top:460px;width:1px;height:21px;background:#d9d9d9"></div>
<div style="position:absolute;left:621px;top:460px;width:1px;height:21px;background:#d9d9d9"></div>
<div style="position:absolute;left:721px;top:460px;width:1px;height:21px;background:#d9d9d9"></div>
<div class="t" style="left:4px;top:467px;font-size:10px;color:#000">23</div>
<div class="t" style="left:24px;top:464px;font-size:10px;color:#000">ParcelsFromKPT</div>
<div class="t" style="left:125px;top:463px;font-size:11.1px;color:#000">23:38:0810000:39</div>
<div class="t" style="left:425px;top:463px;font-size:10.8px;color:#000">Для сельскохоз...</div>
<div class="t" style="left:525px;top:463px;font-size:10.8px;color:#000">Для сельскохоз...</div>
<div class="t" style="left:625px;top:463px;font-size:10.8px;color:#000">Землепользован...</div>
<div class="t" style="left:725px;top:463px;font-size:10.8px;color:#000">Р</div>
<div style="position:absolute;left:21px;top:481px;width:707px;height:19px;background:#fff"></div>
<div style="position:absolute;left:21px;top:500px;width:707px;height:1px;background:#d9d9d9"></div>
<div style="position:absolute;left:0px;top:500px;width:21px;height:1px;background:#e4ecf7"></div>
<div style="position:absolute;left:121px;top:480px;width:1px;height:21px;background:#d9d9d9"></div>
<div style="position:absolute;left:421px;top:480px;width:1px;height:21px;background:#d9d9d9"></div>
<div style="position:absolute;left:521px;top:480px;width:1px;height:21px;background:#d9d9d9"></div>
<div style="position:absolute;left:621px;top:480px;width:1px;height:21px;background:#d9d9d9"></div>
<div style="position:absolute;left:721px;top:480px;width:1px;height:21px;background:#d9d9d9"></div>
<div class="t" style="left:4px;top:487px;font-size:10px;color:#000">24</div>
<div class="t" style="left:24px;top:484px;font-size:10px;color:#000">ParcelsFromKPT</div>
<div class="t" style="left:125px;top:483px;font-size:11.1px;color:#000">23:38:0810000:37</div>
<div class="t" style="left:425px;top:483px;font-size:10.8px;color:#000">Для организаци...</div>
<div class="t" style="left:525px;top:483px;font-size:10.8px;color:#000">Для сельскохоз...</div>
<div class="t" style="left:625px;top:483px;font-size:10.8px;color:#000">Землепользован...</div>
<div class="t" style="left:725px;top:483px;font-size:10.8px;color:#000">Р</div>
<div style="position:absolute;left:21px;top:501px;width:707px;height:19px;background:#f5f5f5"></div>
<div style="position:absolute;left:21px;top:520px;width:707px;height:1px;background:#d9d9d9"></div>
<div style="position:absolute;left:0px;top:520px;width:21px;height:1px;background:#e4ecf7"></div>
<div style="position:absolute;left:121px;top:500px;width:1px;height:21px;background:#d9d9d9"></div>
<div style="position:absolute;left:421px;top:500px;width:1px;height:21px;background:#d9d9d9"></div>
<div style="position:absolute;left:521px;top:500px;width:1px;height:21px;background:#d9d9d9"></div>
<div style="position:absolute;left:621px;top:500px;width:1px;height:21px;background:#d9d9d9"></div>
<div style="position:absolute;left:721px;top:500px;width:1px;height:21px;background:#d9d9d9"></div>
<div class="t" style="left:4px;top:507px;font-size:10px;color:#000">25</div>
<div class="t" style="left:24px;top:504px;font-size:10px;color:#000">ParcelsFromKPT</div>
<div class="t" style="left:125px;top:503px;font-size:11.1px;color:#000">23:38:0810000:35</div>
<div class="t" style="left:425px;top:503px;font-size:10.8px;color:#000">Для крестьянск...</div>
<div class="t" style="left:525px;top:503px;font-size:10.8px;color:#000">Для сельскохоз...</div>
<div class="t" style="left:625px;top:503px;font-size:10.8px;color:#000">Землепользован...</div>
<div class="t" style="left:725px;top:503px;font-size:10.8px;color:#000">Р</div>
<div style="position:absolute;left:21px;top:521px;width:707px;height:19px;background:#fff"></div>
<div style="position:absolute;left:21px;top:540px;width:707px;height:1px;background:#d9d9d9"></div>
<div style="position:absolute;left:0px;top:540px;width:21px;height:1px;background:#e4ecf7"></div>
<div style="position:absolute;left:121px;top:520px;width:1px;height:21px;background:#d9d9d9"></div>
<div style="position:absolute;left:421px;top:520px;width:1px;height:21px;background:#d9d9d9"></div>
<div style="position:absolute;left:521px;top:520px;width:1px;height:21px;background:#d9d9d9"></div>
<div style="position:absolute;left:621px;top:520px;width:1px;height:21px;background:#d9d9d9"></div>
<div style="position:absolute;left:721px;top:520px;width:1px;height:21px;background:#d9d9d9"></div>
<div class="t" style="left:4px;top:527px;font-size:10px;color:#000">26</div>
<div class="t" style="left:24px;top:524px;font-size:10px;color:#000">ParcelsFromKPT</div>
<div class="t" style="left:125px;top:523px;font-size:11.1px;color:#000">23:38:0810000:34</div>
<div class="t" style="left:425px;top:523px;font-size:10.8px;color:#000">Для крестьянск...</div>
<div class="t" style="left:525px;top:523px;font-size:10.8px;color:#000">Для сельскохоз...</div>
<div class="t" style="left:625px;top:523px;font-size:10.8px;color:#000">Землепользован...</div>
<div class="t" style="left:725px;top:523px;font-size:10.8px;color:#000">Р</div>
<div style="position:absolute;left:21px;top:541px;width:707px;height:19px;background:#f5f5f5"></div>
<div style="position:absolute;left:21px;top:560px;width:707px;height:1px;background:#d9d9d9"></div>
<div style="position:absolute;left:0px;top:560px;width:21px;height:1px;background:#e4ecf7"></div>
<div style="position:absolute;left:121px;top:540px;width:1px;height:21px;background:#d9d9d9"></div>
<div style="position:absolute;left:421px;top:540px;width:1px;height:21px;background:#d9d9d9"></div>
<div style="position:absolute;left:521px;top:540px;width:1px;height:21px;background:#d9d9d9"></div>
<div style="position:absolute;left:621px;top:540px;width:1px;height:21px;background:#d9d9d9"></div>
<div style="position:absolute;left:721px;top:540px;width:1px;height:21px;background:#d9d9d9"></div>
<div class="t" style="left:4px;top:547px;font-size:10px;color:#000">27</div>
<div class="t" style="left:24px;top:544px;font-size:10px;color:#000">ParcelsFromKPT</div>
<div class="t" style="left:125px;top:543px;font-size:11.1px;color:#000">23:38:0810000:32</div>
<div class="t" style="left:425px;top:543px;font-size:10.8px;color:#000">Для сельскохоз...</div>
<div class="t" style="left:525px;top:543px;font-size:10.8px;color:#000">Для сельскохоз...</div>
<div class="t" style="left:625px;top:543px;font-size:10.8px;color:#000">Землепользован...</div>
<div class="t" style="left:725px;top:543px;font-size:10.8px;color:#000">Р</div>
<div style="position:absolute;left:21px;top:561px;width:707px;height:19px;background:#fff"></div>
<div style="position:absolute;left:21px;top:580px;width:707px;height:1px;background:#d9d9d9"></div>
<div style="position:absolute;left:0px;top:580px;width:21px;height:1px;background:#e4ecf7"></div>
<div style="position:absolute;left:121px;top:560px;width:1px;height:21px;background:#d9d9d9"></div>
<div style="position:absolute;left:421px;top:560px;width:1px;height:21px;background:#d9d9d9"></div>
<div style="position:absolute;left:521px;top:560px;width:1px;height:21px;background:#d9d9d9"></div>
<div style="position:absolute;left:621px;top:560px;width:1px;height:21px;background:#d9d9d9"></div>
<div style="position:absolute;left:721px;top:560px;width:1px;height:21px;background:#d9d9d9"></div>
<div class="t" style="left:4px;top:567px;font-size:10px;color:#000">28</div>
<div class="t" style="left:24px;top:564px;font-size:10px;color:#000">ParcelsFromKPT</div>
<div class="t" style="left:125px;top:563px;font-size:11.1px;color:#000">Е3:23:38:0000000:238; 23:38:0810000:29</div>
<div class="t" style="left:425px;top:563px;font-size:10.8px;color:#000">Для размещени...</div>
<div class="t" style="left:525px;top:563px;font-size:10.8px;color:#000">Для размещени...</div>
<div class="t" style="left:625px;top:563px;font-size:10.8px;color:#000">Обособленный ...</div>
<div class="t" style="left:725px;top:563px;font-size:10.8px;color:#000">Р</div>
<div style="position:absolute;left:21px;top:581px;width:707px;height:19px;background:#f5f5f5"></div>
<div style="position:absolute;left:21px;top:600px;width:707px;height:1px;background:#d9d9d9"></div>
<div style="position:absolute;left:0px;top:600px;width:21px;height:1px;background:#e4ecf7"></div>
<div style="position:absolute;left:121px;top:580px;width:1px;height:21px;background:#d9d9d9"></div>
<div style="position:absolute;left:421px;top:580px;width:1px;height:21px;background:#d9d9d9"></div>
<div style="position:absolute;left:521px;top:580px;width:1px;height:21px;background:#d9d9d9"></div>
<div style="position:absolute;left:621px;top:580px;width:1px;height:21px;background:#d9d9d9"></div>
<div style="position:absolute;left:721px;top:580px;width:1px;height:21px;background:#d9d9d9"></div>
<div class="t" style="left:4px;top:587px;font-size:10px;color:#000">29</div>
<div class="t" style="left:24px;top:584px;font-size:10px;color:#000">ParcelsFromKPT</div>
<div class="t" style="left:125px;top:583px;font-size:11.1px;color:#000">Е3:23:38:0000000:239; 23:38:0810000:28</div>
<div class="t" style="left:425px;top:583px;font-size:10.8px;color:#000">Для размещени...</div>
<div class="t" style="left:525px;top:583px;font-size:10.8px;color:#000">Для размещени...</div>
<div class="t" style="left:625px;top:583px;font-size:10.8px;color:#000">Обособленный ...</div>
<div class="t" style="left:725px;top:583px;font-size:10.8px;color:#000">Р</div>
<div style="position:absolute;left:21px;top:601px;width:707px;height:19px;background:#fff"></div>
<div style="position:absolute;left:21px;top:620px;width:707px;height:1px;background:#d9d9d9"></div>
<div style="position:absolute;left:0px;top:620px;width:21px;height:1px;background:#e4ecf7"></div>
<div style="position:absolute;left:121px;top:600px;width:1px;height:21px;background:#d9d9d9"></div>
<div style="position:absolute;left:421px;top:600px;width:1px;height:21px;background:#d9d9d9"></div>
<div style="position:absolute;left:521px;top:600px;width:1px;height:21px;background:#d9d9d9"></div>
<div style="position:absolute;left:621px;top:600px;width:1px;height:21px;background:#d9d9d9"></div>
<div style="position:absolute;left:721px;top:600px;width:1px;height:21px;background:#d9d9d9"></div>
<div class="t" style="left:4px;top:607px;font-size:10px;color:#000">30</div>
<div class="t" style="left:24px;top:604px;font-size:10px;color:#000">ParcelsFromKPT</div>
<div class="t" style="left:125px;top:603px;font-size:11.1px;color:#000">Е3:23:38:0000000:239; 23:38:0810000:27</div>
<div class="t" style="left:425px;top:603px;font-size:10.8px;color:#000">Для размещени...</div>
<div class="t" style="left:525px;top:603px;font-size:10.8px;color:#000">Для размещени...</div>
<div class="t" style="left:625px;top:603px;font-size:10.8px;color:#000">Обособленный ...</div>
<div class="t" style="left:725px;top:603px;font-size:10.8px;color:#000">Р</div>
<div style="position:absolute;left:21px;top:621px;width:707px;height:19px;background:#f5f5f5"></div>
<div style="position:absolute;left:21px;top:640px;width:707px;height:1px;background:#d9d9d9"></div>
<div style="position:absolute;left:0px;top:640px;width:21px;height:1px;background:#e4ecf7"></div>
<div style="position:absolute;left:121px;top:620px;width:1px;height:21px;background:#d9d9d9"></div>
<div style="position:absolute;left:421px;top:620px;width:1px;height:21px;background:#d9d9d9"></div>
<div style="position:absolute;left:521px;top:620px;width:1px;height:21px;background:#d9d9d9"></div>
<div style="position:absolute;left:621px;top:620px;width:1px;height:21px;background:#d9d9d9"></div>
<div style="position:absolute;left:721px;top:620px;width:1px;height:21px;background:#d9d9d9"></div>
<div class="t" style="left:4px;top:627px;font-size:10px;color:#000">31</div>
<div class="t" style="left:24px;top:624px;font-size:10px;color:#000">ParcelsFromKPT</div>
<div class="t" style="left:125px;top:623px;font-size:11.1px;color:#000">Е3:23:38:0000000:239; 23:38:0810000:26</div>
<div class="t" style="left:425px;top:623px;font-size:10.8px;color:#000">Для размещени...</div>
<div class="t" style="left:525px;top:623px;font-size:10.8px;color:#000">Для размещени...</div>
<div class="t" style="left:625px;top:623px;font-size:10.8px;color:#000">Обособленный ...</div>
<div class="t" style="left:725px;top:623px;font-size:10.8px;color:#000">Р</div>
<div style="position:absolute;left:21px;top:641px;width:707px;height:19px;background:#fff"></div>
<div style="position:absolute;left:21px;top:660px;width:707px;height:1px;background:#d9d9d9"></div>
<div style="position:absolute;left:0px;top:660px;width:21px;height:1px;background:#e4ecf7"></div>
<div style="position:absolute;left:121px;top:640px;width:1px;height:21px;background:#d9d9d9"></div>
<div style="position:absolute;left:421px;top:640px;width:1px;height:21px;background:#d9d9d9"></div>
<div style="position:absolute;left:521px;top:640px;width:1px;height:21px;background:#d9d9d9"></div>
<div style="position:absolute;left:621px;top:640px;width:1px;height:21px;background:#d9d9d9"></div>
<div style="position:absolute;left:721px;top:640px;width:1px;height:21px;background:#d9d9d9"></div>
<div class="t" style="left:4px;top:647px;font-size:10px;color:#000">32</div>
<div class="t" style="left:24px;top:644px;font-size:10px;color:#000">ParcelsFromKPT</div>
<div class="t" style="left:125px;top:643px;font-size:11.1px;color:#000">Е3:23:38:0000000:239; 23:38:0810000:25</div>
<div class="t" style="left:425px;top:643px;font-size:10.8px;color:#000">Для размещени...</div>
<div class="t" style="left:525px;top:643px;font-size:10.8px;color:#000">Для размещени...</div>
<div class="t" style="left:625px;top:643px;font-size:10.8px;color:#000">Обособленный ...</div>
<div class="t" style="left:725px;top:643px;font-size:10.8px;color:#000">Р</div>
<div style="position:absolute;left:21px;top:661px;width:707px;height:19px;background:#f5f5f5"></div>
<div style="position:absolute;left:21px;top:680px;width:707px;height:1px;background:#d9d9d9"></div>
<div style="position:absolute;left:0px;top:680px;width:21px;height:1px;background:#e4ecf7"></div>
<div style="position:absolute;left:121px;top:660px;width:1px;height:21px;background:#d9d9d9"></div>
<div style="position:absolute;left:421px;top:660px;width:1px;height:21px;background:#d9d9d9"></div>
<div style="position:absolute;left:521px;top:660px;width:1px;height:21px;background:#d9d9d9"></div>
<div style="position:absolute;left:621px;top:660px;width:1px;height:21px;background:#d9d9d9"></div>
<div style="position:absolute;left:721px;top:660px;width:1px;height:21px;background:#d9d9d9"></div>
<div class="t" style="left:4px;top:667px;font-size:10px;color:#000">33</div>
<div class="t" style="left:24px;top:664px;font-size:10px;color:#000">ParcelsFromKPT</div>
<div class="t" style="left:125px;top:663px;font-size:11.1px;color:#000">Е3:23:38:0000000:239; 23:38:0810000:24</div>
<div class="t" style="left:425px;top:663px;font-size:10.8px;color:#000">Для размещени...</div>
<div class="t" style="left:525px;top:663px;font-size:10.8px;color:#000">Для размещени...</div>
<div class="t" style="left:625px;top:663px;font-size:10.8px;color:#000">Обособленный ...</div>
<div class="t" style="left:725px;top:663px;font-size:10.8px;color:#000">Р</div>
</div>
<div style="position:absolute;left:99px;top:145px;width:1px;height:689px;background:#e4ecf7"></div>
<div style="position:absolute;left:100px;top:166px;width:99px;height:19px;border:2px solid #00e676"></div>
<div style="position:absolute;left:806px;top:145px;width:16px;height:690px;background:#f0f0f0"></div>
<div style="position:absolute;left:806px;top:162px;width:16px;height:399px;background:#cdcdcd"></div>
<div style="position:absolute;left:809px;top:357px;width:9px;height:10px;background:#f0f0f0"></div>
<svg style="position:absolute;left:809.5px;top:150.5px;" width="8" height="6" viewBox="0 0 8 6"><path d="M0.7 5.3 L4 1.5 L7.3 5.3" stroke="#505050" stroke-width="2" fill="none"/></svg>
<svg style="position:absolute;left:809.5px;top:822.5px;" width="8" height="6" viewBox="0 0 8 6"><path d="M0.7 0.7 L4 4.5 L7.3 0.7" stroke="#505050" stroke-width="2" fill="none"/></svg>
<div style="position:absolute;left:78px;top:834px;width:744px;height:17px;background:#f0f0f0"></div>
<div style="position:absolute;left:95px;top:836px;width:147px;height:13px;background:#cdcdcd"></div>
<div style="position:absolute;left:163px;top:837px;width:10px;height:10px;background:#f0f0f0"></div>
<svg style="position:absolute;left:84px;top:838.5px;" width="6" height="8" viewBox="0 0 6 8"><path d="M5.3 0.7 L1.5 4 L5.3 7.3" stroke="#505050" stroke-width="2" fill="none"/></svg>
<svg style="position:absolute;left:794px;top:838.5px;" width="6" height="8" viewBox="0 0 6 8"><path d="M0.7 0.7 L4.5 4 L0.7 7.3" stroke="#505050" stroke-width="2" fill="none"/></svg>
<div style="position:absolute;left:806px;top:834px;width:16px;height:17px;background:#f0f0f0"></div>
<div style="position:absolute;left:81px;top:856px;width:96px;height:20px;background:#e5e5e5;border:1px solid #adadad"></div>
<svg style="position:absolute;left:88px;top:859px;" width="12" height="14" viewBox="0 0 12 14"><path d="M0.5 1.5 Q0.5 0.5 1.5 0.5 H10.5 Q11.5 0.5 11.5 1.5 V6 Q11.5 7 10 8 L8.5 9 V13.5 H3.5 V9 L2 8 Q0.5 7 0.5 6 Z" fill="#9a9a9a"/><path d="M3 2 H9 V6.5 L7 8 V12 H5 V8 L3 6.5 Z" fill="#c8c8c8"/></svg>
<div class="t" style="left:105px;top:861px;font-size:11.5px;color:#000;">Все объекты</div>
<svg style="position:absolute;left:169px;top:870px;" width="5" height="3" viewBox="0 0 5 3"><path d="M0 0 H5 L2.5 3Z" fill="#000"/></svg>
<div style="position:absolute;left:775px;top:856px;width:21px;height:20px;background:#efefef;border:1px solid #adadad"></div>
<div style="position:absolute;left:798px;top:856px;width:21px;height:20px;background:#dcecfc;border:1px solid #4a9ae8"></div>
<svg style="position:absolute;left:777px;top:859px;" width="16" height="14" viewBox="0 0 16 14"><defs><linearGradient id="gb" x1="0" y1="0" x2="1" y2="0"><stop offset="0" stop-color="#6ab0ff"/><stop offset="1" stop-color="#0022cc"/></linearGradient></defs><rect x="0.5" y="0.5" width="15" height="13" rx="1" fill="#fff" stroke="#7a9ad8" stroke-width="0.8"/><rect x="0.5" y="0.5" width="15" height="3" fill="url(#gb)"/><rect x="3" y="5.5" width="2" height="2" fill="#3a9aff"/><rect x="3" y="8.5" width="2" height="2" fill="#3a9aff"/><path d="M6 6.3 H13 M6 9.3 H13" stroke="#000" stroke-width="1.2"/></svg>
<svg style="position:absolute;left:802px;top:860px;" width="14" height="14" viewBox="0 0 14 14"><rect x="0.5" y="0.5" width="13" height="13" rx="1.5" fill="#f4f4f4" stroke="#607080" stroke-width="1"/><rect x="1" y="1" width="12" height="3" fill="#b8ccd8"/><path d="M2.5 2.5 H4.5 M6 2.5 H11.5 M2.5 6 H4.5 M6 6 H11.5 M2.5 8 H4.5 M6 8 H11.5 M2.5 10 H4.5 M6 10 H11.5 M2.5 12 H4.5 M6 12 H11.5" stroke="#667" stroke-width="0.9"/></svg></body></html>
